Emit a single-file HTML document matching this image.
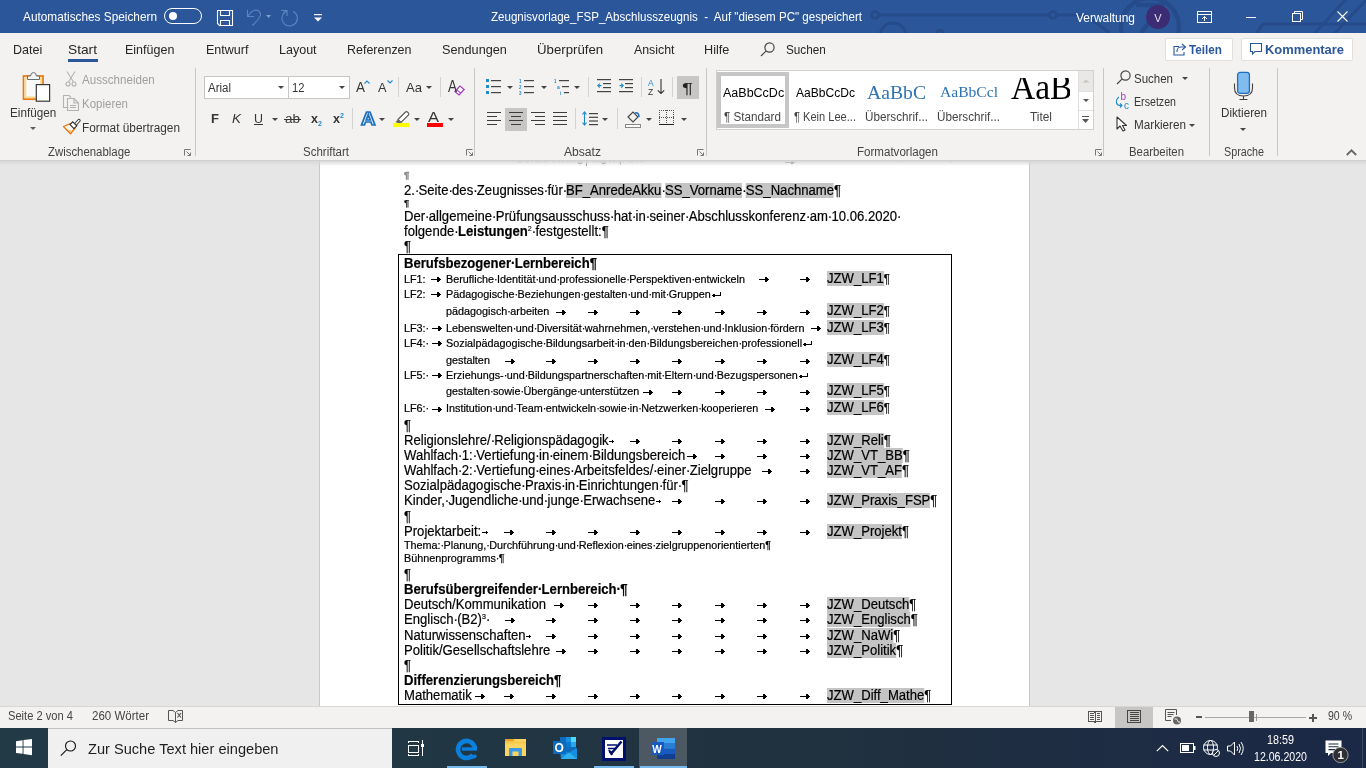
<!DOCTYPE html><html><head><meta charset="utf-8"><style>
*{margin:0;padding:0;box-sizing:border-box}
html,body{width:1366px;height:768px;overflow:hidden;background:#e6e6e6;}
body{will-change:transform;font-family:'Liberation Sans',sans-serif}
.t{position:absolute;white-space:pre;line-height:1}
svg{overflow:visible}
.sp{position:relative}.sp::after{content:'\00B7';position:absolute;left:0;right:0;text-align:center}.hl{background:#c4c4c4;display:inline-block;line-height:15px;height:15px}.dt{-webkit-text-stroke:0.2px #000}</style></head><body><div style="position:absolute;left:319px;top:161px;width:1px;height:545px;background:#c8c8c8;"></div><div style="position:absolute;left:320px;top:161px;width:709px;height:545px;background:#ffffff;"></div><div style="position:absolute;left:1029px;top:161px;width:1px;height:545px;background:#c8c8c8;"></div><div style="position:absolute;left:320px;top:161px;width:709px;height:5px;overflow:hidden;z-index:2"><div class="t" style="left:197px;top:-8px;font-size:11px;color:#8a8a8a;-webkit-text-stroke:0.3px #8a8a8a">Berufs·Kolleg·Hagen|Kthe</div><div class="t" style="left:540px;top:-7px;font-size:8px;color:#b0b0b0">Berufskolleg</div><div class="t" style="left:628px;top:-7px;font-size:9px;color:#999">¶</div></div><div style="position:absolute;left:586px;top:161px;width:1px;height:5px;background:#8a8a8a;"></div><svg style="position:absolute;left:785px;top:160px;z-index:2" width="11" height="5" shape-rendering="crispEdges" fill="#777"><rect x="0" y="2" width="10" height="1"/><rect x="6" y="1" width="2" height="3"/></svg><div style="position:absolute;left:398px;top:254px;width:554px;height:451px;border:1px solid #000;z-index:4"></div><svg style="position:absolute;left:431px;top:277px;z-index:6" width="11" height="5" shape-rendering="crispEdges" fill="#000"><rect x="0" y="2" width="10" height="1"/><rect x="6" y="0" width="2" height="5"/><rect x="8" y="1" width="1" height="3"/></svg><svg style="position:absolute;left:759px;top:277px;z-index:6" width="11" height="5" shape-rendering="crispEdges" fill="#000"><rect x="0" y="2" width="10" height="1"/><rect x="6" y="0" width="2" height="5"/><rect x="8" y="1" width="1" height="3"/></svg><svg style="position:absolute;left:800px;top:277px;z-index:6" width="11" height="5" shape-rendering="crispEdges" fill="#000"><rect x="0" y="2" width="10" height="1"/><rect x="6" y="0" width="2" height="5"/><rect x="8" y="1" width="1" height="3"/></svg><svg style="position:absolute;left:431px;top:292px;z-index:6" width="11" height="5" shape-rendering="crispEdges" fill="#000"><rect x="0" y="2" width="10" height="1"/><rect x="6" y="0" width="2" height="5"/><rect x="8" y="1" width="1" height="3"/></svg><svg style="position:absolute;left:712px;top:292px;z-index:6" width="10" height="6" shape-rendering="crispEdges" fill="#000"><rect x="0" y="3" width="1" height="1"/><rect x="1" y="2" width="2" height="3"/><rect x="3" y="3" width="5" height="1"/><rect x="8" y="0" width="1" height="4"/></svg><svg style="position:absolute;left:556px;top:310px;z-index:6" width="11" height="5" shape-rendering="crispEdges" fill="#000"><rect x="0" y="2" width="10" height="1"/><rect x="6" y="0" width="2" height="5"/><rect x="8" y="1" width="1" height="3"/></svg><svg style="position:absolute;left:588px;top:310px;z-index:6" width="11" height="5" shape-rendering="crispEdges" fill="#000"><rect x="0" y="2" width="10" height="1"/><rect x="6" y="0" width="2" height="5"/><rect x="8" y="1" width="1" height="3"/></svg><svg style="position:absolute;left:630px;top:310px;z-index:6" width="11" height="5" shape-rendering="crispEdges" fill="#000"><rect x="0" y="2" width="10" height="1"/><rect x="6" y="0" width="2" height="5"/><rect x="8" y="1" width="1" height="3"/></svg><svg style="position:absolute;left:672px;top:310px;z-index:6" width="11" height="5" shape-rendering="crispEdges" fill="#000"><rect x="0" y="2" width="10" height="1"/><rect x="6" y="0" width="2" height="5"/><rect x="8" y="1" width="1" height="3"/></svg><svg style="position:absolute;left:715px;top:310px;z-index:6" width="11" height="5" shape-rendering="crispEdges" fill="#000"><rect x="0" y="2" width="10" height="1"/><rect x="6" y="0" width="2" height="5"/><rect x="8" y="1" width="1" height="3"/></svg><svg style="position:absolute;left:757px;top:310px;z-index:6" width="11" height="5" shape-rendering="crispEdges" fill="#000"><rect x="0" y="2" width="10" height="1"/><rect x="6" y="0" width="2" height="5"/><rect x="8" y="1" width="1" height="3"/></svg><svg style="position:absolute;left:800px;top:310px;z-index:6" width="11" height="5" shape-rendering="crispEdges" fill="#000"><rect x="0" y="2" width="10" height="1"/><rect x="6" y="0" width="2" height="5"/><rect x="8" y="1" width="1" height="3"/></svg><svg style="position:absolute;left:432px;top:326px;z-index:6" width="11" height="5" shape-rendering="crispEdges" fill="#000"><rect x="0" y="2" width="10" height="1"/><rect x="6" y="0" width="2" height="5"/><rect x="8" y="1" width="1" height="3"/></svg><svg style="position:absolute;left:811px;top:326px;z-index:6" width="11" height="5" shape-rendering="crispEdges" fill="#000"><rect x="0" y="2" width="10" height="1"/><rect x="6" y="0" width="2" height="5"/><rect x="8" y="1" width="1" height="3"/></svg><svg style="position:absolute;left:432px;top:341px;z-index:6" width="11" height="5" shape-rendering="crispEdges" fill="#000"><rect x="0" y="2" width="10" height="1"/><rect x="6" y="0" width="2" height="5"/><rect x="8" y="1" width="1" height="3"/></svg><svg style="position:absolute;left:803px;top:341px;z-index:6" width="10" height="6" shape-rendering="crispEdges" fill="#000"><rect x="0" y="3" width="1" height="1"/><rect x="1" y="2" width="2" height="3"/><rect x="3" y="3" width="5" height="1"/><rect x="8" y="0" width="1" height="4"/></svg><svg style="position:absolute;left:505px;top:359px;z-index:6" width="11" height="5" shape-rendering="crispEdges" fill="#000"><rect x="0" y="2" width="10" height="1"/><rect x="6" y="0" width="2" height="5"/><rect x="8" y="1" width="1" height="3"/></svg><svg style="position:absolute;left:546px;top:359px;z-index:6" width="11" height="5" shape-rendering="crispEdges" fill="#000"><rect x="0" y="2" width="10" height="1"/><rect x="6" y="0" width="2" height="5"/><rect x="8" y="1" width="1" height="3"/></svg><svg style="position:absolute;left:588px;top:359px;z-index:6" width="11" height="5" shape-rendering="crispEdges" fill="#000"><rect x="0" y="2" width="10" height="1"/><rect x="6" y="0" width="2" height="5"/><rect x="8" y="1" width="1" height="3"/></svg><svg style="position:absolute;left:630px;top:359px;z-index:6" width="11" height="5" shape-rendering="crispEdges" fill="#000"><rect x="0" y="2" width="10" height="1"/><rect x="6" y="0" width="2" height="5"/><rect x="8" y="1" width="1" height="3"/></svg><svg style="position:absolute;left:672px;top:359px;z-index:6" width="11" height="5" shape-rendering="crispEdges" fill="#000"><rect x="0" y="2" width="10" height="1"/><rect x="6" y="0" width="2" height="5"/><rect x="8" y="1" width="1" height="3"/></svg><svg style="position:absolute;left:715px;top:359px;z-index:6" width="11" height="5" shape-rendering="crispEdges" fill="#000"><rect x="0" y="2" width="10" height="1"/><rect x="6" y="0" width="2" height="5"/><rect x="8" y="1" width="1" height="3"/></svg><svg style="position:absolute;left:757px;top:359px;z-index:6" width="11" height="5" shape-rendering="crispEdges" fill="#000"><rect x="0" y="2" width="10" height="1"/><rect x="6" y="0" width="2" height="5"/><rect x="8" y="1" width="1" height="3"/></svg><svg style="position:absolute;left:800px;top:359px;z-index:6" width="11" height="5" shape-rendering="crispEdges" fill="#000"><rect x="0" y="2" width="10" height="1"/><rect x="6" y="0" width="2" height="5"/><rect x="8" y="1" width="1" height="3"/></svg><svg style="position:absolute;left:432px;top:373px;z-index:6" width="11" height="5" shape-rendering="crispEdges" fill="#000"><rect x="0" y="2" width="10" height="1"/><rect x="6" y="0" width="2" height="5"/><rect x="8" y="1" width="1" height="3"/></svg><svg style="position:absolute;left:799px;top:373px;z-index:6" width="10" height="6" shape-rendering="crispEdges" fill="#000"><rect x="0" y="3" width="1" height="1"/><rect x="1" y="2" width="2" height="3"/><rect x="3" y="3" width="5" height="1"/><rect x="8" y="0" width="1" height="4"/></svg><svg style="position:absolute;left:643px;top:390px;z-index:6" width="11" height="5" shape-rendering="crispEdges" fill="#000"><rect x="0" y="2" width="10" height="1"/><rect x="6" y="0" width="2" height="5"/><rect x="8" y="1" width="1" height="3"/></svg><svg style="position:absolute;left:672px;top:390px;z-index:6" width="11" height="5" shape-rendering="crispEdges" fill="#000"><rect x="0" y="2" width="10" height="1"/><rect x="6" y="0" width="2" height="5"/><rect x="8" y="1" width="1" height="3"/></svg><svg style="position:absolute;left:715px;top:390px;z-index:6" width="11" height="5" shape-rendering="crispEdges" fill="#000"><rect x="0" y="2" width="10" height="1"/><rect x="6" y="0" width="2" height="5"/><rect x="8" y="1" width="1" height="3"/></svg><svg style="position:absolute;left:757px;top:390px;z-index:6" width="11" height="5" shape-rendering="crispEdges" fill="#000"><rect x="0" y="2" width="10" height="1"/><rect x="6" y="0" width="2" height="5"/><rect x="8" y="1" width="1" height="3"/></svg><svg style="position:absolute;left:800px;top:390px;z-index:6" width="11" height="5" shape-rendering="crispEdges" fill="#000"><rect x="0" y="2" width="10" height="1"/><rect x="6" y="0" width="2" height="5"/><rect x="8" y="1" width="1" height="3"/></svg><svg style="position:absolute;left:432px;top:407px;z-index:6" width="11" height="5" shape-rendering="crispEdges" fill="#000"><rect x="0" y="2" width="10" height="1"/><rect x="6" y="0" width="2" height="5"/><rect x="8" y="1" width="1" height="3"/></svg><svg style="position:absolute;left:765px;top:407px;z-index:6" width="11" height="5" shape-rendering="crispEdges" fill="#000"><rect x="0" y="2" width="10" height="1"/><rect x="6" y="0" width="2" height="5"/><rect x="8" y="1" width="1" height="3"/></svg><svg style="position:absolute;left:800px;top:407px;z-index:6" width="11" height="5" shape-rendering="crispEdges" fill="#000"><rect x="0" y="2" width="10" height="1"/><rect x="6" y="0" width="2" height="5"/><rect x="8" y="1" width="1" height="3"/></svg><svg style="position:absolute;left:609px;top:439px;z-index:6" width="11" height="5" shape-rendering="crispEdges" fill="#000"><rect x="0" y="2" width="5" height="1"/><rect x="3" y="1" width="1" height="3"/></svg><svg style="position:absolute;left:630px;top:439px;z-index:6" width="11" height="5" shape-rendering="crispEdges" fill="#000"><rect x="0" y="2" width="10" height="1"/><rect x="6" y="0" width="2" height="5"/><rect x="8" y="1" width="1" height="3"/></svg><svg style="position:absolute;left:672px;top:439px;z-index:6" width="11" height="5" shape-rendering="crispEdges" fill="#000"><rect x="0" y="2" width="10" height="1"/><rect x="6" y="0" width="2" height="5"/><rect x="8" y="1" width="1" height="3"/></svg><svg style="position:absolute;left:715px;top:439px;z-index:6" width="11" height="5" shape-rendering="crispEdges" fill="#000"><rect x="0" y="2" width="10" height="1"/><rect x="6" y="0" width="2" height="5"/><rect x="8" y="1" width="1" height="3"/></svg><svg style="position:absolute;left:757px;top:439px;z-index:6" width="11" height="5" shape-rendering="crispEdges" fill="#000"><rect x="0" y="2" width="10" height="1"/><rect x="6" y="0" width="2" height="5"/><rect x="8" y="1" width="1" height="3"/></svg><svg style="position:absolute;left:800px;top:439px;z-index:6" width="11" height="5" shape-rendering="crispEdges" fill="#000"><rect x="0" y="2" width="10" height="1"/><rect x="6" y="0" width="2" height="5"/><rect x="8" y="1" width="1" height="3"/></svg><svg style="position:absolute;left:687px;top:454px;z-index:6" width="11" height="5" shape-rendering="crispEdges" fill="#000"><rect x="0" y="2" width="10" height="1"/><rect x="6" y="0" width="2" height="5"/><rect x="8" y="1" width="1" height="3"/></svg><svg style="position:absolute;left:715px;top:454px;z-index:6" width="11" height="5" shape-rendering="crispEdges" fill="#000"><rect x="0" y="2" width="10" height="1"/><rect x="6" y="0" width="2" height="5"/><rect x="8" y="1" width="1" height="3"/></svg><svg style="position:absolute;left:757px;top:454px;z-index:6" width="11" height="5" shape-rendering="crispEdges" fill="#000"><rect x="0" y="2" width="10" height="1"/><rect x="6" y="0" width="2" height="5"/><rect x="8" y="1" width="1" height="3"/></svg><svg style="position:absolute;left:800px;top:454px;z-index:6" width="11" height="5" shape-rendering="crispEdges" fill="#000"><rect x="0" y="2" width="10" height="1"/><rect x="6" y="0" width="2" height="5"/><rect x="8" y="1" width="1" height="3"/></svg><svg style="position:absolute;left:762px;top:469px;z-index:6" width="11" height="5" shape-rendering="crispEdges" fill="#000"><rect x="0" y="2" width="10" height="1"/><rect x="6" y="0" width="2" height="5"/><rect x="8" y="1" width="1" height="3"/></svg><svg style="position:absolute;left:800px;top:469px;z-index:6" width="11" height="5" shape-rendering="crispEdges" fill="#000"><rect x="0" y="2" width="10" height="1"/><rect x="6" y="0" width="2" height="5"/><rect x="8" y="1" width="1" height="3"/></svg><svg style="position:absolute;left:656px;top:499px;z-index:6" width="11" height="5" shape-rendering="crispEdges" fill="#000"><rect x="0" y="2" width="5" height="1"/><rect x="3" y="1" width="1" height="3"/></svg><svg style="position:absolute;left:672px;top:499px;z-index:6" width="11" height="5" shape-rendering="crispEdges" fill="#000"><rect x="0" y="2" width="10" height="1"/><rect x="6" y="0" width="2" height="5"/><rect x="8" y="1" width="1" height="3"/></svg><svg style="position:absolute;left:715px;top:499px;z-index:6" width="11" height="5" shape-rendering="crispEdges" fill="#000"><rect x="0" y="2" width="10" height="1"/><rect x="6" y="0" width="2" height="5"/><rect x="8" y="1" width="1" height="3"/></svg><svg style="position:absolute;left:757px;top:499px;z-index:6" width="11" height="5" shape-rendering="crispEdges" fill="#000"><rect x="0" y="2" width="10" height="1"/><rect x="6" y="0" width="2" height="5"/><rect x="8" y="1" width="1" height="3"/></svg><svg style="position:absolute;left:800px;top:499px;z-index:6" width="11" height="5" shape-rendering="crispEdges" fill="#000"><rect x="0" y="2" width="10" height="1"/><rect x="6" y="0" width="2" height="5"/><rect x="8" y="1" width="1" height="3"/></svg><svg style="position:absolute;left:482px;top:530px;z-index:6" width="11" height="5" shape-rendering="crispEdges" fill="#000"><rect x="0" y="2" width="6" height="1"/><rect x="4" y="1" width="1" height="3"/></svg><svg style="position:absolute;left:504px;top:530px;z-index:6" width="11" height="5" shape-rendering="crispEdges" fill="#000"><rect x="0" y="2" width="10" height="1"/><rect x="6" y="0" width="2" height="5"/><rect x="8" y="1" width="1" height="3"/></svg><svg style="position:absolute;left:546px;top:530px;z-index:6" width="11" height="5" shape-rendering="crispEdges" fill="#000"><rect x="0" y="2" width="10" height="1"/><rect x="6" y="0" width="2" height="5"/><rect x="8" y="1" width="1" height="3"/></svg><svg style="position:absolute;left:588px;top:530px;z-index:6" width="11" height="5" shape-rendering="crispEdges" fill="#000"><rect x="0" y="2" width="10" height="1"/><rect x="6" y="0" width="2" height="5"/><rect x="8" y="1" width="1" height="3"/></svg><svg style="position:absolute;left:630px;top:530px;z-index:6" width="11" height="5" shape-rendering="crispEdges" fill="#000"><rect x="0" y="2" width="10" height="1"/><rect x="6" y="0" width="2" height="5"/><rect x="8" y="1" width="1" height="3"/></svg><svg style="position:absolute;left:672px;top:530px;z-index:6" width="11" height="5" shape-rendering="crispEdges" fill="#000"><rect x="0" y="2" width="10" height="1"/><rect x="6" y="0" width="2" height="5"/><rect x="8" y="1" width="1" height="3"/></svg><svg style="position:absolute;left:715px;top:530px;z-index:6" width="11" height="5" shape-rendering="crispEdges" fill="#000"><rect x="0" y="2" width="10" height="1"/><rect x="6" y="0" width="2" height="5"/><rect x="8" y="1" width="1" height="3"/></svg><svg style="position:absolute;left:757px;top:530px;z-index:6" width="11" height="5" shape-rendering="crispEdges" fill="#000"><rect x="0" y="2" width="10" height="1"/><rect x="6" y="0" width="2" height="5"/><rect x="8" y="1" width="1" height="3"/></svg><svg style="position:absolute;left:800px;top:530px;z-index:6" width="11" height="5" shape-rendering="crispEdges" fill="#000"><rect x="0" y="2" width="10" height="1"/><rect x="6" y="0" width="2" height="5"/><rect x="8" y="1" width="1" height="3"/></svg><svg style="position:absolute;left:554px;top:603px;z-index:6" width="11" height="5" shape-rendering="crispEdges" fill="#000"><rect x="0" y="2" width="10" height="1"/><rect x="6" y="0" width="2" height="5"/><rect x="8" y="1" width="1" height="3"/></svg><svg style="position:absolute;left:588px;top:603px;z-index:6" width="11" height="5" shape-rendering="crispEdges" fill="#000"><rect x="0" y="2" width="10" height="1"/><rect x="6" y="0" width="2" height="5"/><rect x="8" y="1" width="1" height="3"/></svg><svg style="position:absolute;left:630px;top:603px;z-index:6" width="11" height="5" shape-rendering="crispEdges" fill="#000"><rect x="0" y="2" width="10" height="1"/><rect x="6" y="0" width="2" height="5"/><rect x="8" y="1" width="1" height="3"/></svg><svg style="position:absolute;left:672px;top:603px;z-index:6" width="11" height="5" shape-rendering="crispEdges" fill="#000"><rect x="0" y="2" width="10" height="1"/><rect x="6" y="0" width="2" height="5"/><rect x="8" y="1" width="1" height="3"/></svg><svg style="position:absolute;left:715px;top:603px;z-index:6" width="11" height="5" shape-rendering="crispEdges" fill="#000"><rect x="0" y="2" width="10" height="1"/><rect x="6" y="0" width="2" height="5"/><rect x="8" y="1" width="1" height="3"/></svg><svg style="position:absolute;left:757px;top:603px;z-index:6" width="11" height="5" shape-rendering="crispEdges" fill="#000"><rect x="0" y="2" width="10" height="1"/><rect x="6" y="0" width="2" height="5"/><rect x="8" y="1" width="1" height="3"/></svg><svg style="position:absolute;left:800px;top:603px;z-index:6" width="11" height="5" shape-rendering="crispEdges" fill="#000"><rect x="0" y="2" width="10" height="1"/><rect x="6" y="0" width="2" height="5"/><rect x="8" y="1" width="1" height="3"/></svg><svg style="position:absolute;left:505px;top:618px;z-index:6" width="11" height="5" shape-rendering="crispEdges" fill="#000"><rect x="0" y="2" width="10" height="1"/><rect x="6" y="0" width="2" height="5"/><rect x="8" y="1" width="1" height="3"/></svg><svg style="position:absolute;left:546px;top:618px;z-index:6" width="11" height="5" shape-rendering="crispEdges" fill="#000"><rect x="0" y="2" width="10" height="1"/><rect x="6" y="0" width="2" height="5"/><rect x="8" y="1" width="1" height="3"/></svg><svg style="position:absolute;left:588px;top:618px;z-index:6" width="11" height="5" shape-rendering="crispEdges" fill="#000"><rect x="0" y="2" width="10" height="1"/><rect x="6" y="0" width="2" height="5"/><rect x="8" y="1" width="1" height="3"/></svg><svg style="position:absolute;left:630px;top:618px;z-index:6" width="11" height="5" shape-rendering="crispEdges" fill="#000"><rect x="0" y="2" width="10" height="1"/><rect x="6" y="0" width="2" height="5"/><rect x="8" y="1" width="1" height="3"/></svg><svg style="position:absolute;left:672px;top:618px;z-index:6" width="11" height="5" shape-rendering="crispEdges" fill="#000"><rect x="0" y="2" width="10" height="1"/><rect x="6" y="0" width="2" height="5"/><rect x="8" y="1" width="1" height="3"/></svg><svg style="position:absolute;left:715px;top:618px;z-index:6" width="11" height="5" shape-rendering="crispEdges" fill="#000"><rect x="0" y="2" width="10" height="1"/><rect x="6" y="0" width="2" height="5"/><rect x="8" y="1" width="1" height="3"/></svg><svg style="position:absolute;left:757px;top:618px;z-index:6" width="11" height="5" shape-rendering="crispEdges" fill="#000"><rect x="0" y="2" width="10" height="1"/><rect x="6" y="0" width="2" height="5"/><rect x="8" y="1" width="1" height="3"/></svg><svg style="position:absolute;left:800px;top:618px;z-index:6" width="11" height="5" shape-rendering="crispEdges" fill="#000"><rect x="0" y="2" width="10" height="1"/><rect x="6" y="0" width="2" height="5"/><rect x="8" y="1" width="1" height="3"/></svg><svg style="position:absolute;left:526px;top:634px;z-index:6" width="11" height="5" shape-rendering="crispEdges" fill="#000"><rect x="0" y="2" width="5" height="1"/><rect x="3" y="1" width="1" height="3"/></svg><svg style="position:absolute;left:546px;top:634px;z-index:6" width="11" height="5" shape-rendering="crispEdges" fill="#000"><rect x="0" y="2" width="10" height="1"/><rect x="6" y="0" width="2" height="5"/><rect x="8" y="1" width="1" height="3"/></svg><svg style="position:absolute;left:588px;top:634px;z-index:6" width="11" height="5" shape-rendering="crispEdges" fill="#000"><rect x="0" y="2" width="10" height="1"/><rect x="6" y="0" width="2" height="5"/><rect x="8" y="1" width="1" height="3"/></svg><svg style="position:absolute;left:630px;top:634px;z-index:6" width="11" height="5" shape-rendering="crispEdges" fill="#000"><rect x="0" y="2" width="10" height="1"/><rect x="6" y="0" width="2" height="5"/><rect x="8" y="1" width="1" height="3"/></svg><svg style="position:absolute;left:672px;top:634px;z-index:6" width="11" height="5" shape-rendering="crispEdges" fill="#000"><rect x="0" y="2" width="10" height="1"/><rect x="6" y="0" width="2" height="5"/><rect x="8" y="1" width="1" height="3"/></svg><svg style="position:absolute;left:715px;top:634px;z-index:6" width="11" height="5" shape-rendering="crispEdges" fill="#000"><rect x="0" y="2" width="10" height="1"/><rect x="6" y="0" width="2" height="5"/><rect x="8" y="1" width="1" height="3"/></svg><svg style="position:absolute;left:757px;top:634px;z-index:6" width="11" height="5" shape-rendering="crispEdges" fill="#000"><rect x="0" y="2" width="10" height="1"/><rect x="6" y="0" width="2" height="5"/><rect x="8" y="1" width="1" height="3"/></svg><svg style="position:absolute;left:800px;top:634px;z-index:6" width="11" height="5" shape-rendering="crispEdges" fill="#000"><rect x="0" y="2" width="10" height="1"/><rect x="6" y="0" width="2" height="5"/><rect x="8" y="1" width="1" height="3"/></svg><svg style="position:absolute;left:556px;top:649px;z-index:6" width="11" height="5" shape-rendering="crispEdges" fill="#000"><rect x="0" y="2" width="10" height="1"/><rect x="6" y="0" width="2" height="5"/><rect x="8" y="1" width="1" height="3"/></svg><svg style="position:absolute;left:588px;top:649px;z-index:6" width="11" height="5" shape-rendering="crispEdges" fill="#000"><rect x="0" y="2" width="10" height="1"/><rect x="6" y="0" width="2" height="5"/><rect x="8" y="1" width="1" height="3"/></svg><svg style="position:absolute;left:630px;top:649px;z-index:6" width="11" height="5" shape-rendering="crispEdges" fill="#000"><rect x="0" y="2" width="10" height="1"/><rect x="6" y="0" width="2" height="5"/><rect x="8" y="1" width="1" height="3"/></svg><svg style="position:absolute;left:672px;top:649px;z-index:6" width="11" height="5" shape-rendering="crispEdges" fill="#000"><rect x="0" y="2" width="10" height="1"/><rect x="6" y="0" width="2" height="5"/><rect x="8" y="1" width="1" height="3"/></svg><svg style="position:absolute;left:715px;top:649px;z-index:6" width="11" height="5" shape-rendering="crispEdges" fill="#000"><rect x="0" y="2" width="10" height="1"/><rect x="6" y="0" width="2" height="5"/><rect x="8" y="1" width="1" height="3"/></svg><svg style="position:absolute;left:757px;top:649px;z-index:6" width="11" height="5" shape-rendering="crispEdges" fill="#000"><rect x="0" y="2" width="10" height="1"/><rect x="6" y="0" width="2" height="5"/><rect x="8" y="1" width="1" height="3"/></svg><svg style="position:absolute;left:800px;top:649px;z-index:6" width="11" height="5" shape-rendering="crispEdges" fill="#000"><rect x="0" y="2" width="10" height="1"/><rect x="6" y="0" width="2" height="5"/><rect x="8" y="1" width="1" height="3"/></svg><svg style="position:absolute;left:475px;top:694px;z-index:6" width="11" height="5" shape-rendering="crispEdges" fill="#000"><rect x="0" y="2" width="10" height="1"/><rect x="6" y="0" width="2" height="5"/><rect x="8" y="1" width="1" height="3"/></svg><svg style="position:absolute;left:504px;top:694px;z-index:6" width="11" height="5" shape-rendering="crispEdges" fill="#000"><rect x="0" y="2" width="10" height="1"/><rect x="6" y="0" width="2" height="5"/><rect x="8" y="1" width="1" height="3"/></svg><svg style="position:absolute;left:546px;top:694px;z-index:6" width="11" height="5" shape-rendering="crispEdges" fill="#000"><rect x="0" y="2" width="10" height="1"/><rect x="6" y="0" width="2" height="5"/><rect x="8" y="1" width="1" height="3"/></svg><svg style="position:absolute;left:588px;top:694px;z-index:6" width="11" height="5" shape-rendering="crispEdges" fill="#000"><rect x="0" y="2" width="10" height="1"/><rect x="6" y="0" width="2" height="5"/><rect x="8" y="1" width="1" height="3"/></svg><svg style="position:absolute;left:630px;top:694px;z-index:6" width="11" height="5" shape-rendering="crispEdges" fill="#000"><rect x="0" y="2" width="10" height="1"/><rect x="6" y="0" width="2" height="5"/><rect x="8" y="1" width="1" height="3"/></svg><svg style="position:absolute;left:672px;top:694px;z-index:6" width="11" height="5" shape-rendering="crispEdges" fill="#000"><rect x="0" y="2" width="10" height="1"/><rect x="6" y="0" width="2" height="5"/><rect x="8" y="1" width="1" height="3"/></svg><svg style="position:absolute;left:715px;top:694px;z-index:6" width="11" height="5" shape-rendering="crispEdges" fill="#000"><rect x="0" y="2" width="10" height="1"/><rect x="6" y="0" width="2" height="5"/><rect x="8" y="1" width="1" height="3"/></svg><svg style="position:absolute;left:757px;top:694px;z-index:6" width="11" height="5" shape-rendering="crispEdges" fill="#000"><rect x="0" y="2" width="10" height="1"/><rect x="6" y="0" width="2" height="5"/><rect x="8" y="1" width="1" height="3"/></svg><svg style="position:absolute;left:800px;top:694px;z-index:6" width="11" height="5" shape-rendering="crispEdges" fill="#000"><rect x="0" y="2" width="10" height="1"/><rect x="6" y="0" width="2" height="5"/><rect x="8" y="1" width="1" height="3"/></svg><div style="position:absolute;left:0px;top:0px;width:1366px;height:33px;background:#2b579a;"></div><svg style="position:absolute;left:0px;top:0px;overflow:hidden" width="1366" height="33" viewBox="0 0 1366 33">
    <g stroke="#264b8a" stroke-width="3" fill="none">
      <path d="M878 15 H1049 M1057 15 H1085"/>
      <circle cx="875" cy="15" r="3.5"/>
      <circle cx="1053" cy="15" r="3.5"/>
      <circle cx="1150" cy="27" r="29" stroke-width="4.5"/>
      <path d="M1136 5 H1162 L1141 33" stroke-width="4.5"/>
      <circle cx="893" cy="36" r="13"/>
      <circle cx="940" cy="34" r="3.5"/>
      <path d="M1256 34 L1263 24 H1366"/>
      <path d="M1314 34 L1346 -1"/>
      <path d="M1334 34 L1366 0"/>
      <path d="M1085 15 L1110 33"/>
    </g></svg><div style="position:absolute;left:164px;top:8px;width:38px;height:16px;border:1px solid #fff;border-radius:8px"></div><div style="position:absolute;left:169px;top:12px;width:8px;height:8px;background:#fff;border-radius:50%"></div><svg style="position:absolute;left:217px;top:10px;" width="17" height="17" viewBox="0 0 17 17"><g fill="none" stroke="#fff" stroke-width="1.1"><path d="M0.5 0.5 H15.5 V15.5 H2.5 L0.5 13.5 Z"/><path d="M3.5 0.5 V5.5 H12.5 V0.5"/><path d="M3.5 15.5 V10.5 H12.5 V15.5"/></g></svg><svg style="position:absolute;left:246px;top:9px;" width="27" height="18" viewBox="0 0 27 18"><g fill="none" stroke="#5f86c4" stroke-width="1.1"><path d="M1.5 1 V7.5 H8"/><path d="M2 7 Q6 1 10 1 Q14.5 1.5 14.5 6 Q14 9 6.5 16.5"/></g><path d="M20 6 h5 l-2.5 3z" fill="#7f9fd0"/></svg><svg style="position:absolute;left:280px;top:9px;" width="18" height="18" viewBox="0 0 18 18"><g fill="none" stroke="#5f86c4" stroke-width="1.1"><path d="M1 1.5 H7 V7"/><path d="M13 2.2 A7.8 7.8 0 1 1 5 3"/><path d="M3.5 4 L7 1.5"/></g></svg><svg style="position:absolute;left:313px;top:12px;" width="10" height="10" viewBox="0 0 10 10"><rect x="1" y="2" width="8" height="1.2" fill="#fff"/><path d="M1 5.5 h8 l-4 4z" fill="#fff"/></svg><div style="position:absolute;left:1146px;top:5px;width:24px;height:24px;border-radius:50%;background:#3c2c73"></div><svg style="position:absolute;left:1197px;top:11px;" width="15" height="13" viewBox="0 0 15 13"><g fill="none" stroke="#fff" stroke-width="1"><rect x="0.5" y="0.5" width="14" height="11"/><path d="M0.5 3.5 H14.5"/><path d="M7.5 10 V5.5 M5 8 L7.5 5.5 L10 8"/></g></svg><div style="position:absolute;left:1246px;top:17px;width:10px;height:1px;background:#ffffff;"></div><svg style="position:absolute;left:1292px;top:11px;" width="11" height="11" viewBox="0 0 11 11"><g fill="none" stroke="#fff" stroke-width="1"><rect x="0.5" y="2.5" width="8" height="8"/><path d="M2.5 2.5 V0.5 H10.5 V8.5 H8.5"/></g></svg><svg style="position:absolute;left:1337px;top:11px;" width="11" height="11" viewBox="0 0 11 11"><g stroke="#fff" stroke-width="1.1"><path d="M0.5 0.5 L10.5 10.5 M10.5 0.5 L0.5 10.5"/></g></svg><div style="position:absolute;left:0px;top:33px;width:1366px;height:127px;background:#f3f2f1;"></div><div style="position:absolute;left:0px;top:160px;width:1366px;height:1px;background:#d2d0ce;"></div><div style="position:absolute;left:0;top:161px;width:1366px;height:5px;background:linear-gradient(#d8d8d8,rgba(230,230,230,0));z-index:3"></div><div style="position:absolute;left:68px;top:59px;width:30px;height:3px;background:#2b579a;"></div><svg style="position:absolute;left:760px;top:42px;" width="15" height="15" viewBox="0 0 15 15"><g fill="none" stroke="#444" stroke-width="1.2"><circle cx="9.5" cy="5.5" r="4.6"/><path d="M6.2 8.8 L1 14"/></g></svg><div style="position:absolute;left:1165px;top:38px;width:68px;height:23px;background:#fff;border:1px solid #e1dfdd;border-radius:2px"></div><div style="position:absolute;left:1241px;top:38px;width:112px;height:23px;background:#fff;border:1px solid #e1dfdd;border-radius:2px"></div><svg style="position:absolute;left:1173px;top:43px;" width="13" height="13" viewBox="0 0 13 13"><g fill="none" stroke="#2b579a" stroke-width="1.1"><path d="M9 1 L12.5 4 L9 7"/><path d="M12.5 4 H8 A4 4 0 0 0 4 8 V9"/><path d="M6 3.5 H1 V12 H11 V9"/></g></svg><svg style="position:absolute;left:1250px;top:43px;" width="13" height="13" viewBox="0 0 13 13"><g fill="none" stroke="#2b579a" stroke-width="1.1"><path d="M0.5 0.5 H11.5 V8.5 H5 L2.5 11 V8.5 H0.5 Z"/></g></svg><div style="position:absolute;left:195px;top:68px;width:1px;height:88px;background:#c8c6c4;"></div><div style="position:absolute;left:474px;top:68px;width:1px;height:88px;background:#c8c6c4;"></div><div style="position:absolute;left:706px;top:68px;width:1px;height:88px;background:#c8c6c4;"></div><div style="position:absolute;left:1103px;top:68px;width:1px;height:88px;background:#c8c6c4;"></div><div style="position:absolute;left:1209px;top:68px;width:1px;height:88px;background:#c8c6c4;"></div><div style="position:absolute;left:1277px;top:68px;width:1px;height:88px;background:#c8c6c4;"></div><svg style="position:absolute;left:184px;top:149px;" width="7" height="7" viewBox="0 0 7 7"><g fill="none" stroke="#777" stroke-width="1"><path d="M0.5 6.5 V0.5 H6.5"/><path d="M2.5 2.5 L6 6 M6.5 3.5 V6.5 H3.5"/></g></svg><svg style="position:absolute;left:466px;top:149px;" width="7" height="7" viewBox="0 0 7 7"><g fill="none" stroke="#777" stroke-width="1"><path d="M0.5 6.5 V0.5 H6.5"/><path d="M2.5 2.5 L6 6 M6.5 3.5 V6.5 H3.5"/></g></svg><svg style="position:absolute;left:697px;top:149px;" width="7" height="7" viewBox="0 0 7 7"><g fill="none" stroke="#777" stroke-width="1"><path d="M0.5 6.5 V0.5 H6.5"/><path d="M2.5 2.5 L6 6 M6.5 3.5 V6.5 H3.5"/></g></svg><svg style="position:absolute;left:1095px;top:149px;" width="7" height="7" viewBox="0 0 7 7"><g fill="none" stroke="#777" stroke-width="1"><path d="M0.5 6.5 V0.5 H6.5"/><path d="M2.5 2.5 L6 6 M6.5 3.5 V6.5 H3.5"/></g></svg><svg style="position:absolute;left:1346px;top:149px;" width="11" height="7" viewBox="0 0 11 7"><path d="M0.8 6 L5.5 1.3 L10.2 6" fill="none" stroke="#666" stroke-width="1.8"/></svg><svg style="position:absolute;left:20px;top:71px;" width="32" height="32" viewBox="0 0 32 32">
      <rect x="3.5" y="5" width="19.5" height="23.2" fill="#fafafa" stroke="#e8790c" stroke-width="1.7"/>
      <rect x="5.5" y="7" width="15.5" height="19.2" fill="none" stroke="#fad98c" stroke-width="1.6"/>
      <path d="M7.5 8.5 V5 H10.5 Q11 1.5 13.5 1.5 Q16 1.5 16.5 5 H19.5 V8.5 Z" fill="#f4f4f4" stroke="#6b6b6b" stroke-width="1"/>
      <rect x="16.3" y="13.6" width="13.3" height="16.6" fill="#fff" stroke="#3a3a3a" stroke-width="1.2"/></svg><svg style="position:absolute;left:30px;top:127px;" width="6" height="3" viewBox="0 0 6 3"><path d="M0 0 H6 L3.0 3 Z" fill="#605e5c"/></svg><svg style="position:absolute;left:65px;top:71px;" width="12" height="16" viewBox="0 0 12 16"><g fill="none" stroke="#b4b2b0" stroke-width="1.1"><path d="M2 0.5 L8.5 11 M10 0.5 L3.5 11"/><circle cx="3" cy="13" r="2"/><circle cx="9" cy="13" r="2"/></g></svg><svg style="position:absolute;left:63px;top:95px;" width="16" height="16" viewBox="0 0 16 16"><g fill="none" stroke="#b4b2b0" stroke-width="1.1"><path d="M5.5 12.5 H0.5 V0.5 H6 L8 2.5"/><path d="M4.5 3.5 H11 L15.5 8 V15.5 H4.5 Z"/><path d="M11 3.5 V8 H15.5"/><path d="M7 10.5 H13 M7 12.5 H13"/></g></svg><svg style="position:absolute;left:62px;top:118px;" width="18" height="17" viewBox="0 0 18 17"><path d="M1.5 8.5 L8.5 5.5 L13 10 L8.5 15.8 Z" fill="#fdf7ee" stroke="#e8700c" stroke-width="1.3" stroke-linejoin="round"/>
       <path d="M5 11.5 L10 12.5 L8.3 14.6 Z" fill="#f7c26e"/>
       <path d="M13.5 6.5 L17 2.5" stroke="#333" stroke-width="3.4" stroke-linecap="round"/>
       <path d="M13.5 6.5 L17 2.5" stroke="#fff" stroke-width="1.4" stroke-linecap="round"/>
       <path d="M10.8 3.8 L14.8 7.8 L12 10.6 L8 6.6 Z" fill="#fff" stroke="#333" stroke-width="1.2"/></svg><div style="position:absolute;left:204px;top:76px;width:85px;height:23px;background:#fff;border:1px solid #c8c6c4"></div><div style="position:absolute;left:288px;top:76px;width:62px;height:23px;background:#fff;border:1px solid #c8c6c4"></div><svg style="position:absolute;left:278px;top:86px;" width="6" height="3" viewBox="0 0 6 3"><path d="M0 0 H6 L3.0 3 Z" fill="#444"/></svg><svg style="position:absolute;left:339px;top:86px;" width="6" height="3" viewBox="0 0 6 3"><path d="M0 0 H6 L3.0 3 Z" fill="#444"/></svg><svg style="position:absolute;left:364px;top:80px;" width="6" height="4" viewBox="0 0 6 4"><path d="M0.5 3.5 L3 1 L5.5 3.5" fill="none" stroke="#1e8bcd" stroke-width="1.1"/></svg><svg style="position:absolute;left:387px;top:80px;" width="6" height="4" viewBox="0 0 6 4"><path d="M0.5 0.5 L3 3 L5.5 0.5" fill="none" stroke="#1e8bcd" stroke-width="1.1"/></svg><div style="position:absolute;left:398px;top:77px;width:1px;height:20px;background:#d4d2d0;"></div><svg style="position:absolute;left:426px;top:86px;" width="6" height="3" viewBox="0 0 6 3"><path d="M0 0 H6 L3.0 3 Z" fill="#444"/></svg><div style="position:absolute;left:440px;top:77px;width:1px;height:20px;background:#d4d2d0;"></div><svg style="position:absolute;left:454px;top:85px;" width="11" height="10" viewBox="0 0 11 10"><path d="M0.8 6.5 L6 1 L10.2 4.5 L5 10 Z" fill="#fff" stroke="#a33ebf" stroke-width="1.2"/><path d="M2.6 4.6 L6.6 8.2" stroke="#a33ebf" stroke-width="1.1"/></svg><div style="position:absolute;left:254px;top:124px;width:9px;height:1px;background:#363636;"></div><svg style="position:absolute;left:272px;top:118px;" width="6" height="3" viewBox="0 0 6 3"><path d="M0 0 H6 L3.0 3 Z" fill="#444"/></svg><div style="position:absolute;left:284px;top:119px;width:17px;height:1px;background:#363636;"></div><div style="position:absolute;left:352px;top:108px;width:1px;height:21px;background:#d4d2d0;"></div><svg style="position:absolute;left:379px;top:118px;" width="6" height="3" viewBox="0 0 6 3"><path d="M0 0 H6 L3.0 3 Z" fill="#444"/></svg><svg style="position:absolute;left:393px;top:110px;" width="17" height="19" viewBox="0 0 17 19"><path d="M5 9.5 L12.5 2 Q13.5 1.2 14.5 2 L15.5 3 Q16.2 4 15.5 5 L8 12.5 Z" fill="#fff" stroke="#555" stroke-width="1.1"/><path d="M5 9.5 L8 12.5 L6.5 14 L2.5 12 Z" fill="#666"/><rect x="0" y="13" width="16" height="4" fill="#ffff00"/></svg><svg style="position:absolute;left:414px;top:118px;" width="6" height="3" viewBox="0 0 6 3"><path d="M0 0 H6 L3.0 3 Z" fill="#444"/></svg><div style="position:absolute;left:427px;top:123px;width:16px;height:4px;background:#ff0000;"></div><svg style="position:absolute;left:448px;top:118px;" width="6" height="3" viewBox="0 0 6 3"><path d="M0 0 H6 L3.0 3 Z" fill="#444"/></svg><svg style="position:absolute;left:486px;top:79px;" width="16" height="16" viewBox="0 0 16 16"><rect x="0" y="0" width="3" height="3" fill="#1e8bcd"/><rect x="0" y="6" width="3" height="3" fill="#1e8bcd"/><rect x="0" y="12" width="3" height="3" fill="#1e8bcd"/><rect x="5" y="1" width="10" height="1.2" fill="#444"/><rect x="5" y="7" width="10" height="1.2" fill="#444"/><rect x="5" y="13" width="10" height="1.2" fill="#444"/></svg><svg style="position:absolute;left:507px;top:86px;" width="6" height="3" viewBox="0 0 6 3"><path d="M0 0 H6 L3.0 3 Z" fill="#444"/></svg><svg style="position:absolute;left:519px;top:79px;" width="15" height="16" viewBox="0 0 15 16"><text x="0" y="4" font-size="4.5" fill="#1e8bcd" font-family="Liberation Sans" font-weight="700">1</text><text x="0" y="10" font-size="4.5" fill="#1e8bcd" font-family="Liberation Sans" font-weight="700">2</text><text x="0" y="16" font-size="4.5" fill="#1e8bcd" font-family="Liberation Sans" font-weight="700">3</text><rect x="5" y="1" width="10" height="1.2" fill="#444"/><rect x="5" y="7" width="10" height="1.2" fill="#444"/><rect x="5" y="13" width="10" height="1.2" fill="#444"/></svg><svg style="position:absolute;left:541px;top:86px;" width="6" height="3" viewBox="0 0 6 3"><path d="M0 0 H6 L3.0 3 Z" fill="#444"/></svg><svg style="position:absolute;left:554px;top:79px;" width="16" height="16" viewBox="0 0 16 16"><text x="0" y="4" font-size="4.5" fill="#1e8bcd" font-family="Liberation Sans" font-weight="700">1</text><text x="3" y="10" font-size="5" fill="#1e8bcd" font-family="Liberation Sans" font-weight="700">a</text><text x="6" y="16" font-size="4.5" fill="#1e8bcd" font-family="Liberation Sans" font-weight="700">i</text><rect x="5" y="1" width="10" height="1.2" fill="#444"/><rect x="8" y="7" width="7" height="1.2" fill="#444"/><rect x="10" y="13" width="5" height="1.2" fill="#444"/></svg><svg style="position:absolute;left:574px;top:86px;" width="6" height="3" viewBox="0 0 6 3"><path d="M0 0 H6 L3.0 3 Z" fill="#444"/></svg><div style="position:absolute;left:588px;top:77px;width:1px;height:20px;background:#d4d2d0;"></div><svg style="position:absolute;left:597px;top:79px;" width="15" height="14" viewBox="0 0 15 14"><rect x="0" y="0" width="14" height="1.2" fill="#444"/><rect x="6" y="4" width="8" height="1.2" fill="#444"/><rect x="6" y="8" width="8" height="1.2" fill="#444"/><rect x="0" y="12" width="14" height="1.2" fill="#444"/><path d="M4.5 6.6 H0.8 M2.8 4.6 L0.8 6.6 L2.8 8.6" fill="none" stroke="#1e8bcd" stroke-width="1.1"/></svg><svg style="position:absolute;left:619px;top:79px;" width="15" height="14" viewBox="0 0 15 14"><rect x="0" y="0" width="14" height="1.2" fill="#444"/><rect x="6" y="4" width="8" height="1.2" fill="#444"/><rect x="6" y="8" width="8" height="1.2" fill="#444"/><rect x="0" y="12" width="14" height="1.2" fill="#444"/><path d="M0.5 6.6 H4.2 M2.2 4.6 L4.2 6.6 L2.2 8.6" fill="none" stroke="#1e8bcd" stroke-width="1.1"/></svg><div style="position:absolute;left:641px;top:77px;width:1px;height:20px;background:#d4d2d0;"></div><svg style="position:absolute;left:648px;top:78px;" width="18" height="17" viewBox="0 0 18 17"><text x="0" y="8" font-size="8.5" fill="#1e8bcd" font-family="Liberation Sans">A</text><text x="0" y="16.5" font-size="8.5" fill="#333" font-family="Liberation Sans">Z</text><path d="M13 1 V15.5 M9.8 12.3 L13 15.5 L16.2 12.3" fill="none" stroke="#333" stroke-width="1.1"/></svg><div style="position:absolute;left:672px;top:77px;width:1px;height:20px;background:#d4d2d0;"></div><div style="position:absolute;left:677px;top:76px;width:22px;height:23px;background:#c8c6c4;"></div><svg style="position:absolute;left:487px;top:112px;shape-rendering:crispEdges;" width="14" height="14" viewBox="0 0 14 14"><rect x="0" y="0" width="14" height="1" fill="#3c3c3c"/><rect x="0" y="4" width="10" height="1" fill="#3c3c3c"/><rect x="0" y="8" width="14" height="1" fill="#3c3c3c"/><rect x="0" y="12" width="10" height="1" fill="#3c3c3c"/></svg><div style="position:absolute;left:505px;top:108px;width:22px;height:23px;background:#c8c6c4;"></div><svg style="position:absolute;left:509px;top:112px;shape-rendering:crispEdges;" width="14" height="14" viewBox="0 0 14 14"><rect x="0" y="0" width="14" height="1" fill="#3c3c3c"/><rect x="2" y="4" width="10" height="1" fill="#3c3c3c"/><rect x="0" y="8" width="14" height="1" fill="#3c3c3c"/><rect x="2" y="12" width="10" height="1" fill="#3c3c3c"/></svg><svg style="position:absolute;left:531px;top:112px;shape-rendering:crispEdges;" width="14" height="14" viewBox="0 0 14 14"><rect x="0" y="0" width="14" height="1" fill="#3c3c3c"/><rect x="4" y="4" width="10" height="1" fill="#3c3c3c"/><rect x="0" y="8" width="14" height="1" fill="#3c3c3c"/><rect x="4" y="12" width="10" height="1" fill="#3c3c3c"/></svg><svg style="position:absolute;left:553px;top:112px;shape-rendering:crispEdges;" width="14" height="14" viewBox="0 0 14 14"><rect x="0" y="0" width="14" height="1" fill="#3c3c3c"/><rect x="0" y="4" width="14" height="1" fill="#3c3c3c"/><rect x="0" y="8" width="14" height="1" fill="#3c3c3c"/><rect x="0" y="12" width="14" height="1" fill="#3c3c3c"/></svg><div style="position:absolute;left:575px;top:108px;width:1px;height:21px;background:#d4d2d0;"></div><svg style="position:absolute;left:582px;top:111px;" width="18" height="16" viewBox="0 0 18 16"><path d="M2.5 1 V14 M0.5 3.5 L2.5 1 L4.5 3.5 M0.5 11.5 L2.5 14 L4.5 11.5" fill="none" stroke="#1e8bcd" stroke-width="1.1"/><rect x="7" y="2" width="9" height="1.2" fill="#444"/><rect x="7" y="5.7" width="9" height="1.2" fill="#444"/><rect x="7" y="9.4" width="9" height="1.2" fill="#444"/><rect x="7" y="13" width="9" height="1.2" fill="#444"/></svg><svg style="position:absolute;left:602px;top:118px;" width="6" height="3" viewBox="0 0 6 3"><path d="M0 0 H6 L3.0 3 Z" fill="#444"/></svg><div style="position:absolute;left:617px;top:108px;width:1px;height:21px;background:#d4d2d0;"></div><svg style="position:absolute;left:625px;top:110px;" width="17" height="18" viewBox="0 0 17 18"><path d="M3 7 L8 2 L13 7 L8 12 Z" fill="none" stroke="#444" stroke-width="1.1"/><path d="M10 3 Q14 2 14 7" fill="none" stroke="#1e6fc0" stroke-width="1.5"/><rect x="0.5" y="14.5" width="15" height="3" fill="#fff" stroke="#888" stroke-width="1"/></svg><svg style="position:absolute;left:646px;top:118px;" width="6" height="3" viewBox="0 0 6 3"><path d="M0 0 H6 L3.0 3 Z" fill="#444"/></svg><svg style="position:absolute;left:659px;top:110px;shape-rendering:crispEdges;" width="16" height="16" viewBox="0 0 16 16"><g fill="#555"><rect x="0" y="0" width="1" height="1"/><rect x="0" y="0" width="1" height="1"/><rect x="14" y="0" width="1" height="1"/><rect x="0" y="7" width="1" height="1"/><rect x="7" y="0" width="1" height="1"/><rect x="2" y="0" width="1" height="1"/><rect x="0" y="2" width="1" height="1"/><rect x="14" y="2" width="1" height="1"/><rect x="2" y="7" width="1" height="1"/><rect x="7" y="2" width="1" height="1"/><rect x="4" y="0" width="1" height="1"/><rect x="0" y="4" width="1" height="1"/><rect x="14" y="4" width="1" height="1"/><rect x="4" y="7" width="1" height="1"/><rect x="7" y="4" width="1" height="1"/><rect x="6" y="0" width="1" height="1"/><rect x="0" y="6" width="1" height="1"/><rect x="14" y="6" width="1" height="1"/><rect x="6" y="7" width="1" height="1"/><rect x="7" y="6" width="1" height="1"/><rect x="8" y="0" width="1" height="1"/><rect x="0" y="8" width="1" height="1"/><rect x="14" y="8" width="1" height="1"/><rect x="8" y="7" width="1" height="1"/><rect x="7" y="8" width="1" height="1"/><rect x="10" y="0" width="1" height="1"/><rect x="0" y="10" width="1" height="1"/><rect x="14" y="10" width="1" height="1"/><rect x="10" y="7" width="1" height="1"/><rect x="7" y="10" width="1" height="1"/><rect x="12" y="0" width="1" height="1"/><rect x="0" y="12" width="1" height="1"/><rect x="14" y="12" width="1" height="1"/><rect x="12" y="7" width="1" height="1"/><rect x="7" y="12" width="1" height="1"/><rect x="14" y="0" width="1" height="1"/><rect x="0" y="14" width="1" height="1"/><rect x="14" y="14" width="1" height="1"/><rect x="14" y="7" width="1" height="1"/><rect x="7" y="14" width="1" height="1"/></g><rect x="0" y="14" width="15" height="1.3" fill="#222"/></svg><svg style="position:absolute;left:681px;top:118px;" width="6" height="3" viewBox="0 0 6 3"><path d="M0 0 H6 L3.0 3 Z" fill="#444"/></svg><div style="position:absolute;left:716px;top:70px;width:378px;height:60px;background:#fff;border:1px solid #d2d0ce"></div><div style="position:absolute;left:717px;top:72px;width:72px;height:56px;border:4px solid #c6c6c6"></div><div style="position:absolute;left:1078px;top:71px;width:1px;height:58px;background:#e1dfdd;"></div><div style="position:absolute;left:1079px;top:71px;width:14px;height:20px;background:#e9e8e7;"></div><div style="position:absolute;left:1079px;top:91px;width:14px;height:1px;background:#e1dfdd;"></div><div style="position:absolute;left:1079px;top:110px;width:14px;height:1px;background:#e1dfdd;"></div><svg style="position:absolute;left:1082px;top:79px;" width="8" height="4" viewBox="0 0 8 4"><path d="M0.5 3.5 L4 0.5 L7.5 3.5" fill="#c8c6c4"/></svg><svg style="position:absolute;left:1083px;top:99px;" width="6" height="3" viewBox="0 0 6 3"><path d="M0 0 H6 L3.0 3 Z" fill="#555"/></svg><svg style="position:absolute;left:1082px;top:116px;" width="8" height="8" viewBox="0 0 8 8"><rect x="0" y="0" width="7" height="1" fill="#555"/><path d="M0 3 H7 L3.5 7 Z" fill="#555"/></svg><div style="position:absolute;left:1008px;top:78px;width:62px;height:30px;overflow:hidden;z-index:6"><div class="t" style="left:3px;top:-9px;font-size:36px;color:#000;font-family:'Liberation Serif';transform:scaleX(0.93);transform-origin:0 0">AaB</div></div><svg style="position:absolute;left:1116px;top:70px;" width="15" height="15" viewBox="0 0 15 15"><g fill="none" stroke="#444" stroke-width="1.2"><circle cx="9.5" cy="5.5" r="4.6"/><path d="M6.2 8.8 L1 14"/></g></svg><svg style="position:absolute;left:1182px;top:77px;" width="6" height="3" viewBox="0 0 6 3"><path d="M0 0 H6 L3.0 3 Z" fill="#444"/></svg><svg style="position:absolute;left:1115px;top:93px;" width="15" height="16" viewBox="0 0 15 16"><text x="5.5" y="7" font-size="10" fill="#a33ebf" font-family="Liberation Sans">b</text><text x="9" y="16" font-size="10" fill="#1e8bcd" font-family="Liberation Sans">c</text><path d="M4 4 Q1 6 1.5 10 Q2.5 13 7 12.5 M5 10.5 L7 12.5 L5 14.5" fill="none" stroke="#1e8bcd" stroke-width="1.1"/></svg><svg style="position:absolute;left:1116px;top:116px;" width="12" height="16" viewBox="0 0 12 16"><path d="M1 1 L1 13 L4 10 L7 15 L9 14 L6.5 9.5 L10.5 9.5 Z" fill="#fff" stroke="#333" stroke-width="1.1" stroke-linejoin="round"/></svg><svg style="position:absolute;left:1189px;top:124px;" width="6" height="3" viewBox="0 0 6 3"><path d="M0 0 H6 L3.0 3 Z" fill="#444"/></svg><svg style="position:absolute;left:1233px;top:71px;" width="21" height="30" viewBox="0 0 21 30"><rect x="4.6" y="1.4" width="11.8" height="21" rx="2.6" fill="#80bdee" stroke="#1f6fc0" stroke-width="1.3"/><path d="M1.5 12.5 V17 Q1.5 25 10.5 25 Q19.5 25 19.5 17 V12.5" fill="none" stroke="#444" stroke-width="1.1"/><path d="M10.5 25 V28.5 M6.5 28.5 H14.5" stroke="#444" stroke-width="1.1"/></svg><svg style="position:absolute;left:1240px;top:128px;" width="6" height="3" viewBox="0 0 6 3"><path d="M0 0 H6 L3.0 3 Z" fill="#444"/></svg><div style="position:absolute;left:0px;top:706px;width:1366px;height:1px;background:#d6d6d6;"></div><div style="position:absolute;left:0px;top:707px;width:1366px;height:21px;background:#f3f2f1;"></div><svg style="position:absolute;left:168px;top:710px;" width="16" height="14" viewBox="0 0 16 14"><g fill="none" stroke="#555" stroke-width="1"><path d="M0.5 0.5 H5 L7.5 2.5 V12.5 L5 10.5 H0.5 Z"/><path d="M7.5 2.5 L10 0.5 H14.5 V10.5 H10 L7.5 12.5"/><path d="M9.5 3 L13 7.5 M13 3 L9.5 7.5" stroke-width="1.2"/></g></svg><svg style="position:absolute;left:1088px;top:710px;shape-rendering:crispEdges" width="15" height="14" viewBox="0 0 15 14"><g fill="none" stroke="#555" stroke-width="1"><path d="M0.5 1.5 H6 L7 2.5 L8 1.5 H13.5 V11.5 H8 L7 12.5 L6 11.5 H0.5 Z"/><path d="M7 2.5 V12.5"/><path d="M2 3.5 H5.5 M8.5 3.5 H12"/><path d="M2 5.5 H5.5 M8.5 5.5 H12"/><path d="M2 7.5 H5.5 M8.5 7.5 H12"/><path d="M2 9.5 H5.5 M8.5 9.5 H12"/></g></svg><div style="position:absolute;left:1115px;top:707px;width:38px;height:21px;background:#c8c6c4;"></div><svg style="position:absolute;left:1127px;top:710px;shape-rendering:crispEdges" width="15" height="14" viewBox="0 0 15 14"><g fill="none" stroke="#444" stroke-width="1"><rect x="0.5" y="0.5" width="13" height="12"/><path d="M2.5 2.5 H11.5"/><path d="M2.5 4.5 H11.5"/><path d="M2.5 6.5 H11.5"/><path d="M2.5 8.5 H11.5"/><path d="M2.5 10.5 H11.5"/></g></svg><svg style="position:absolute;left:1165px;top:709px;" width="17" height="16" viewBox="0 0 17 16"><g fill="none" stroke="#555" stroke-width="1"><path d="M11.5 6 V0.5 H0.5 V11.5 H6"/><path d="M2.5 3.5 H9.5 M2.5 5.5 H8.5 M2.5 7.5 H6.5"/></g><circle cx="12" cy="11.5" r="4" fill="#666"/><path d="M9.5 10 Q12 9 12.5 11.5 Q13 14 15 13" stroke="#f3f2f1" stroke-width="1" fill="none"/></svg><div style="position:absolute;left:1196px;top:716px;width:6px;height:2px;background:#555;"></div><div style="position:absolute;left:1205px;top:717px;width:101px;height:1px;background:#a8a8a8;"></div><div style="position:absolute;left:1249px;top:711px;width:5px;height:11px;background:#666;"></div><div style="position:absolute;left:1256px;top:714px;width:1px;height:7px;background:#999;"></div><div style="position:absolute;left:1309px;top:717px;width:8px;height:2px;background:#555;"></div><div style="position:absolute;left:1312px;top:714px;width:2px;height:8px;background:#555;"></div><div style="position:absolute;left:0;top:728px;width:1366px;height:40px;background:linear-gradient(90deg,#213a46 0%,#213744 30%,#20313f 60%,#1e2c43 80%,#1b2846 100%)"></div><svg style="position:absolute;left:16px;top:739px;" width="17" height="18" viewBox="0 0 17 18"><path d="M0 2.2 L6.6 1.3 V7.6 H0 Z M7.5 1.1 L16 0 V7.6 H7.5 Z M0 8.5 H6.6 V14.8 L0 14 Z M7.5 8.5 H16 V16.2 L7.5 15 Z" fill="#fff"/></svg><div style="position:absolute;left:48px;top:728px;width:344px;height:40px;background:#f0f0f0;"></div><div style="position:absolute;left:48px;top:728px;width:344px;height:1px;background:#c2c2c2;"></div><svg style="position:absolute;left:60px;top:740px;" width="17" height="17" viewBox="0 0 17 17"><g fill="none" stroke="#111" stroke-width="1.1"><circle cx="10.5" cy="6" r="5"/><path d="M6.8 9.7 L0.8 15.7"/></g></svg><svg style="position:absolute;left:407px;top:739px;shape-rendering:crispEdges" width="18" height="18" viewBox="0 0 18 18"><g fill="none" stroke="#fff" stroke-width="1"><path d="M1.5 4 V2.5 H11.5 V4"/><rect x="1.5" y="6.5" width="10" height="7"/><path d="M1.5 15 V16.5 H11.5 V15"/><path d="M15.5 1 V17"/></g><rect x="14" y="5" width="3" height="3" fill="#fff"/></svg><svg style="position:absolute;left:456px;top:736px;" width="23" height="24" viewBox="0 0 23 24"><path d="M19 12.5 A8.5 8.5 0 1 0 17 19" stroke="#0a7fdc" stroke-width="4.6" fill="none"/><rect x="6" y="11.3" width="15" height="3.4" fill="#0a7fdc"/><path d="M17 19 L20.5 18.5 V21.5 Q17 23.5 12 23" fill="#0a7fdc"/></svg><svg style="position:absolute;left:505px;top:739px;" width="22" height="18" viewBox="0 0 22 18"><rect x="0" y="0" width="21" height="17" fill="#fcd462"/><rect x="0" y="0" width="9" height="2.5" fill="#e6a527"/><rect x="0" y="2.5" width="21" height="2" fill="#f7c64a"/><path d="M4 17 V10 Q4 9 5 9 H16 Q17 9 17 10 V17 H13.5 V12.5 H7.5 V17 Z" fill="#3c9be8"/></svg><svg style="position:absolute;left:552px;top:736px;" width="26" height="23" viewBox="0 0 26 23"><rect x="8" y="1" width="16" height="17" fill="#0f6cbd"/><rect x="14" y="1" width="5" height="5" fill="#1b8ee0"/><rect x="19" y="1" width="5" height="5" fill="#50d9ff"/><rect x="14" y="6" width="5" height="5" fill="#0b78d0"/><rect x="19" y="6" width="5" height="5" fill="#28a8ea"/><path d="M8 12 L16.5 17 L25 12 V23 H9 Z" fill="#1490df"/><path d="M9 23 L17 16.5 L25 23 Z" fill="#2fb0f0"/><rect x="1" y="5" width="13" height="13" fill="#0a6ac0"/><text x="2.6" y="15.8" font-size="12" font-weight="700" fill="#fff" font-family="Liberation Sans">O</text></svg><svg style="position:absolute;left:602px;top:737px;" width="24" height="24" viewBox="0 0 24 24"><rect x="0" y="0" width="24" height="24" fill="#00106e"/><rect x="3" y="3" width="18" height="18" fill="#fff"/><path d="M5 8 H15 M6 11.5 H13 M7 15 H11" stroke="#00106e" stroke-width="1.6"/><path d="M9 17 L19.5 4.5" stroke="#00106e" stroke-width="2.5"/><path d="M7 13 L10 18" stroke="#00106e" stroke-width="2"/></svg><div style="position:absolute;left:639px;top:728px;width:48px;height:40px;background:#4c5862;"></div><svg style="position:absolute;left:651px;top:738px;" width="24" height="21" viewBox="0 0 24 21"><rect x="6" y="0" width="18" height="21" fill="#41a5ee"/><rect x="6" y="5" width="18" height="5.5" fill="#2b7cd3"/><rect x="6" y="10.5" width="18" height="5.5" fill="#185abd"/><rect x="6" y="16" width="18" height="5" fill="#103f91"/><rect x="0" y="4" width="13" height="13" fill="#185abd"/><text x="1.3" y="14.5" font-size="10" font-weight="700" fill="#fff" font-family="Liberation Sans">W</text></svg><div style="position:absolute;left:447px;top:766px;width:40px;height:2px;background:#76b9ed;"></div><div style="position:absolute;left:594px;top:766px;width:40px;height:2px;background:#76b9ed;"></div><div style="position:absolute;left:640px;top:766px;width:47px;height:2px;background:#76b9ed;"></div><svg style="position:absolute;left:1156px;top:744px;" width="13" height="8" viewBox="0 0 13 8"><path d="M0.8 7.2 L6.5 1.5 L12.2 7.2" fill="none" stroke="#fff" stroke-width="1.2"/></svg><svg style="position:absolute;left:1180px;top:743px;" width="16" height="11" viewBox="0 0 16 11"><rect x="0.5" y="0.5" width="13" height="9" fill="none" stroke="#fff" stroke-width="1"/><rect x="2" y="2" width="7" height="6" fill="#fff"/><rect x="14" y="3" width="1.5" height="4" fill="#fff"/></svg><svg style="position:absolute;left:1203px;top:740px;" width="17" height="17" viewBox="0 0 17 17"><g fill="none" stroke="#fff" stroke-width="1"><circle cx="7.5" cy="7.5" r="7"/><ellipse cx="7.5" cy="7.5" rx="3" ry="7"/><path d="M0.5 5 H14.5 M0.5 10 H11"/></g><circle cx="13" cy="13" r="3.5" fill="#1e2d44" stroke="#fff" stroke-width="1"/><path d="M11 15 L15 11" stroke="#fff" stroke-width="1"/></svg><svg style="position:absolute;left:1227px;top:741px;" width="17" height="15" viewBox="0 0 17 15"><g fill="none" stroke="#fff" stroke-width="1"><path d="M0.5 5 H3.5 L7.5 1 V14 L3.5 10 H0.5 Z"/><path d="M10 5 Q11.5 7.5 10 10 M12 3 Q15 7.5 12 12 M14 1 Q18.5 7.5 14 14"/></g></svg><svg style="position:absolute;left:1325px;top:740px;" width="26" height="26" viewBox="0 0 26 26"><path d="M0.5 0.5 H16.5 V13 H6 L3 16 V13 H0.5 Z" fill="#fff"/><path d="M3.5 4 H13.5 M3.5 6.8 H13.5 M3.5 9.6 H10" stroke="#1e2d44" stroke-width="1.1"/><circle cx="15.5" cy="15" r="7.6" fill="#2d2f33" stroke="#9a9a9a" stroke-width="1"/><text x="12.6" y="19.2" font-size="11.5" font-weight="700" fill="#fff" font-family="Liberation Sans">1</text></svg><div style="position:absolute;left:1362px;top:728px;width:1px;height:40px;background:#3a4a5a;"></div><div class="t" style="left:404.00px;top:170.00px;font-size:9.8px;color:#888888;font-weight:400;font-family:'Liberation Sans',sans-serif;z-index:6;-webkit-text-stroke:0.5px #888;">¶</div><div class="t" style="left:404.00px;top:183.00px;font-size:14px;color:#000;font-weight:400;font-family:'Liberation Sans',sans-serif;z-index:6;transform:scaleX(0.9357);transform-origin:0 0;"><span class="dt">2.<span class="sp"> </span>Seite<span class="sp"> </span>des<span class="sp"> </span>Zeugnisses<span class="sp"> </span>für<span class="sp"> </span></span></div><div class="t" style="left:566.38px;top:183.00px;font-size:14px;color:#000;font-weight:400;font-family:'Liberation Sans',sans-serif;z-index:6;transform:scaleX(0.9357);transform-origin:0 0;"><span class="dt"><span class="hl">BF_AnredeAkku</span><span class="sp"> </span><span class="hl">SS_Vorname</span><span class="sp"> </span><span class="hl">SS_Nachname</span>¶</span></div><div class="t" style="left:404.00px;top:198.00px;font-size:9.8px;color:#000;font-weight:400;font-family:'Liberation Sans',sans-serif;z-index:6;-webkit-text-stroke:0.2px #000;">¶</div><div class="t" style="left:404.00px;top:209.00px;font-size:14px;color:#000;font-weight:400;font-family:'Liberation Sans',sans-serif;z-index:6;transform:scaleX(0.9357);transform-origin:0 0;"><span class="dt">Der<span class="sp"> </span>allgemeine<span class="sp"> </span>Prüfungsausschuss<span class="sp"> </span>hat<span class="sp"> </span>in<span class="sp"> </span>seiner<span class="sp"> </span>Abschlusskonferenz<span class="sp"> </span>am<span class="sp"> </span>10.06.2020<span class="sp"> </span></span></div><div class="t" style="left:404.00px;top:224.00px;font-size:14px;color:#000;font-weight:400;font-family:'Liberation Sans',sans-serif;z-index:6;transform:scaleX(0.9357);transform-origin:0 0;"><span class="dt">folgende<span class="sp"> </span></span></div><div class="t" style="left:457.90px;top:224.00px;font-size:14px;color:#000;font-weight:400;font-family:'Liberation Sans',sans-serif;z-index:6;transform:scaleX(0.9357);transform-origin:0 0;"><span class="dt"><b>Leistungen</b><span style="font-size:7.5px;vertical-align:5px;color:#333">2</span><span class="sp"> </span>festgestellt:¶</span></div><div class="t" style="left:404.00px;top:239.00px;font-size:14px;color:#000;font-weight:400;font-family:'Liberation Sans',sans-serif;z-index:6;transform:scaleX(0.9357);transform-origin:0 0;"><span class="dt">¶</span></div><div class="t" style="left:404.00px;top:256.00px;font-size:14px;color:#000;font-weight:700;font-family:'Liberation Sans',sans-serif;z-index:6;transform:scaleX(0.9357);transform-origin:0 0;"><span class="dt">Berufsbezogener<span class="sp"> </span>Lernbereich¶</span></div><div class="t" style="left:404.00px;top:274.00px;font-size:10.8px;color:#000;font-weight:400;font-family:'Liberation Sans',sans-serif;z-index:6;"><span class="dt">LF1:</span></div><div class="t" style="left:446.07px;top:274.00px;font-size:10.8px;color:#000;font-weight:400;font-family:'Liberation Sans',sans-serif;z-index:6;"><span class="dt">Berufliche<span class="sp"> </span>Identität<span class="sp"> </span>und<span class="sp"> </span>professionelle<span class="sp"> </span>Perspektiven<span class="sp"> </span>entwickeln</span></div><div class="t" style="left:827.00px;top:271.00px;font-size:14px;color:#000;font-weight:400;font-family:'Liberation Sans',sans-serif;z-index:6;transform:scaleX(0.9357);transform-origin:0 0;"><span class="dt"><span class="hl">JZW_LF1</span><span style="font-size:12px">¶</span></span></div><div class="t" style="left:404.00px;top:289.00px;font-size:10.8px;color:#000;font-weight:400;font-family:'Liberation Sans',sans-serif;z-index:6;"><span class="dt">LF2:</span></div><div class="t" style="left:446.07px;top:289.00px;font-size:10.8px;color:#000;font-weight:400;font-family:'Liberation Sans',sans-serif;z-index:6;"><span class="dt">Pädagogische<span class="sp"> </span>Beziehungen<span class="sp"> </span>gestalten<span class="sp"> </span>und<span class="sp"> </span>mit<span class="sp"> </span>Gruppen</span></div><div class="t" style="left:446.07px;top:306.00px;font-size:10.8px;color:#000;font-weight:400;font-family:'Liberation Sans',sans-serif;z-index:6;"><span class="dt">pädagogisch<span class="sp"> </span>arbeiten</span></div><div class="t" style="left:827.00px;top:303.00px;font-size:14px;color:#000;font-weight:400;font-family:'Liberation Sans',sans-serif;z-index:6;transform:scaleX(0.9357);transform-origin:0 0;"><span class="dt"><span class="hl">JZW_LF2</span><span style="font-size:12px">¶</span></span></div><div class="t" style="left:404.00px;top:323.00px;font-size:10.8px;color:#000;font-weight:400;font-family:'Liberation Sans',sans-serif;z-index:6;"><span class="dt">LF3:<span class="sp"> </span></span></div><div class="t" style="left:446.07px;top:323.00px;font-size:10.8px;color:#000;font-weight:400;font-family:'Liberation Sans',sans-serif;z-index:6;"><span class="dt">Lebenswelten<span class="sp"> </span>und<span class="sp"> </span>Diversität<span class="sp"> </span>wahrnehmen,<span class="sp"> </span>verstehen<span class="sp"> </span>und<span class="sp"> </span>Inklusion<span class="sp"> </span>fördern</span></div><div class="t" style="left:827.00px;top:320.00px;font-size:14px;color:#000;font-weight:400;font-family:'Liberation Sans',sans-serif;z-index:6;transform:scaleX(0.9357);transform-origin:0 0;"><span class="dt"><span class="hl">JZW_LF3</span><span style="font-size:12px">¶</span></span></div><div class="t" style="left:404.00px;top:338.00px;font-size:10.8px;color:#000;font-weight:400;font-family:'Liberation Sans',sans-serif;z-index:6;"><span class="dt">LF4:<span class="sp"> </span></span></div><div class="t" style="left:446.07px;top:338.00px;font-size:10.8px;color:#000;font-weight:400;font-family:'Liberation Sans',sans-serif;z-index:6;"><span class="dt">Sozialpädagogische<span class="sp"> </span>Bildungsarbeit<span class="sp"> </span>in<span class="sp"> </span>den<span class="sp"> </span>Bildungsbereichen<span class="sp"> </span>professionell</span></div><div class="t" style="left:446.07px;top:355.00px;font-size:10.8px;color:#000;font-weight:400;font-family:'Liberation Sans',sans-serif;z-index:6;"><span class="dt">gestalten</span></div><div class="t" style="left:827.00px;top:352.00px;font-size:14px;color:#000;font-weight:400;font-family:'Liberation Sans',sans-serif;z-index:6;transform:scaleX(0.9357);transform-origin:0 0;"><span class="dt"><span class="hl">JZW_LF4</span><span style="font-size:12px">¶</span></span></div><div class="t" style="left:404.00px;top:370.00px;font-size:10.8px;color:#000;font-weight:400;font-family:'Liberation Sans',sans-serif;z-index:6;"><span class="dt">LF5:<span class="sp"> </span></span></div><div class="t" style="left:446.07px;top:370.00px;font-size:10.8px;color:#000;font-weight:400;font-family:'Liberation Sans',sans-serif;z-index:6;"><span class="dt">Erziehungs-<span class="sp"> </span>und<span class="sp"> </span>Bildungspartnerschaften<span class="sp"> </span>mit<span class="sp"> </span>Eltern<span class="sp"> </span>und<span class="sp"> </span>Bezugspersonen</span></div><div class="t" style="left:446.07px;top:386.00px;font-size:10.8px;color:#000;font-weight:400;font-family:'Liberation Sans',sans-serif;z-index:6;"><span class="dt">gestalten<span class="sp"> </span>sowie<span class="sp"> </span>Übergänge<span class="sp"> </span>unterstützen</span></div><div class="t" style="left:827.00px;top:383.00px;font-size:14px;color:#000;font-weight:400;font-family:'Liberation Sans',sans-serif;z-index:6;transform:scaleX(0.9357);transform-origin:0 0;"><span class="dt"><span class="hl">JZW_LF5</span><span style="font-size:12px">¶</span></span></div><div class="t" style="left:404.00px;top:403.00px;font-size:10.8px;color:#000;font-weight:400;font-family:'Liberation Sans',sans-serif;z-index:6;"><span class="dt">LF6:<span class="sp"> </span></span></div><div class="t" style="left:446.07px;top:403.00px;font-size:10.8px;color:#000;font-weight:400;font-family:'Liberation Sans',sans-serif;z-index:6;"><span class="dt">Institution<span class="sp"> </span>und<span class="sp"> </span>Team<span class="sp"> </span>entwickeln<span class="sp"> </span>sowie<span class="sp"> </span>in<span class="sp"> </span>Netzwerken<span class="sp"> </span>kooperieren</span></div><div class="t" style="left:827.00px;top:400.00px;font-size:14px;color:#000;font-weight:400;font-family:'Liberation Sans',sans-serif;z-index:6;transform:scaleX(0.9357);transform-origin:0 0;"><span class="dt"><span class="hl">JZW_LF6</span><span style="font-size:12px">¶</span></span></div><div class="t" style="left:404.00px;top:418.00px;font-size:14px;color:#000;font-weight:400;font-family:'Liberation Sans',sans-serif;z-index:6;transform:scaleX(0.9357);transform-origin:0 0;"><span class="dt">¶</span></div><div class="t" style="left:404.00px;top:433.00px;font-size:14px;color:#000;font-weight:400;font-family:'Liberation Sans',sans-serif;z-index:6;transform:scaleX(0.9357);transform-origin:0 0;"><span class="dt">Religionslehre/<span class="sp"> </span>Religionspädagogik</span></div><div class="t" style="left:827.00px;top:433.00px;font-size:14px;color:#000;font-weight:400;font-family:'Liberation Sans',sans-serif;z-index:6;transform:scaleX(0.9357);transform-origin:0 0;"><span class="dt"><span class="hl">JZW_Reli</span>¶</span></div><div class="t" style="left:404.00px;top:448.00px;font-size:14px;color:#000;font-weight:400;font-family:'Liberation Sans',sans-serif;z-index:6;transform:scaleX(0.9357);transform-origin:0 0;"><span class="dt">Wahlfach<span class="sp"> </span>1:<span class="sp"> </span>Vertiefung<span class="sp"> </span>in<span class="sp"> </span>einem<span class="sp"> </span>Bildungsbereich</span></div><div class="t" style="left:827.00px;top:448.00px;font-size:14px;color:#000;font-weight:400;font-family:'Liberation Sans',sans-serif;z-index:6;transform:scaleX(0.9357);transform-origin:0 0;"><span class="dt"><span class="hl">JZW_VT_BB</span>¶</span></div><div class="t" style="left:404.00px;top:463.00px;font-size:14px;color:#000;font-weight:400;font-family:'Liberation Sans',sans-serif;z-index:6;transform:scaleX(0.9357);transform-origin:0 0;"><span class="dt">Wahlfach<span class="sp"> </span>2:<span class="sp"> </span>Vertiefung<span class="sp"> </span>eines<span class="sp"> </span>Arbeitsfeldes/<span class="sp"> </span>einer<span class="sp"> </span>Zielgruppe</span></div><div class="t" style="left:827.00px;top:463.00px;font-size:14px;color:#000;font-weight:400;font-family:'Liberation Sans',sans-serif;z-index:6;transform:scaleX(0.9357);transform-origin:0 0;"><span class="dt"><span class="hl">JZW_VT_AF</span>¶</span></div><div class="t" style="left:404.00px;top:478.00px;font-size:14px;color:#000;font-weight:400;font-family:'Liberation Sans',sans-serif;z-index:6;transform:scaleX(0.9357);transform-origin:0 0;"><span class="dt">Sozialpädagogische<span class="sp"> </span>Praxis<span class="sp"> </span>in<span class="sp"> </span>Einrichtungen<span class="sp"> </span>für<span class="sp"> </span>¶</span></div><div class="t" style="left:404.00px;top:493.00px;font-size:14px;color:#000;font-weight:400;font-family:'Liberation Sans',sans-serif;z-index:6;transform:scaleX(0.9357);transform-origin:0 0;"><span class="dt">Kinder,<span class="sp"> </span>Jugendliche<span class="sp"> </span>und<span class="sp"> </span>junge<span class="sp"> </span>Erwachsene</span></div><div class="t" style="left:827.00px;top:493.00px;font-size:14px;color:#000;font-weight:400;font-family:'Liberation Sans',sans-serif;z-index:6;transform:scaleX(0.9357);transform-origin:0 0;"><span class="dt"><span class="hl">JZW_Praxis_FSP</span>¶</span></div><div class="t" style="left:404.00px;top:509.00px;font-size:14px;color:#000;font-weight:400;font-family:'Liberation Sans',sans-serif;z-index:6;transform:scaleX(0.9357);transform-origin:0 0;"><span class="dt">¶</span></div><div class="t" style="left:404.00px;top:524.00px;font-size:14px;color:#000;font-weight:400;font-family:'Liberation Sans',sans-serif;z-index:6;transform:scaleX(0.9357);transform-origin:0 0;"><span class="dt">Projektarbeit:</span></div><div class="t" style="left:827.00px;top:524.00px;font-size:14px;color:#000;font-weight:400;font-family:'Liberation Sans',sans-serif;z-index:6;transform:scaleX(0.9357);transform-origin:0 0;"><span class="dt"><span class="hl">JZW_Projekt</span>¶</span></div><div class="t" style="left:404.00px;top:540.00px;font-size:10.8px;color:#000;font-weight:400;font-family:'Liberation Sans',sans-serif;z-index:6;"><span class="dt">Thema:<span class="sp"> </span>Planung,<span class="sp"> </span>Durchführung<span class="sp"> </span>und<span class="sp"> </span>Reflexion<span class="sp"> </span>eines<span class="sp"> </span>zielgruppenorientierten¶</span></div><div class="t" style="left:404.00px;top:553.00px;font-size:10.8px;color:#000;font-weight:400;font-family:'Liberation Sans',sans-serif;z-index:6;"><span class="dt">Bühnenprogramms<span class="sp"> </span>¶</span></div><div class="t" style="left:404.00px;top:567.00px;font-size:14px;color:#000;font-weight:400;font-family:'Liberation Sans',sans-serif;z-index:6;transform:scaleX(0.9357);transform-origin:0 0;"><span class="dt">¶</span></div><div class="t" style="left:404.00px;top:582.00px;font-size:14px;color:#000;font-weight:700;font-family:'Liberation Sans',sans-serif;z-index:6;transform:scaleX(0.9357);transform-origin:0 0;"><span class="dt">Berufsübergreifender<span class="sp"> </span>Lernbereich<span class="sp"> </span>¶</span></div><div class="t" style="left:404.00px;top:597.00px;font-size:14px;color:#000;font-weight:400;font-family:'Liberation Sans',sans-serif;z-index:6;transform:scaleX(0.9357);transform-origin:0 0;"><span class="dt">Deutsch/Kommunikation</span></div><div class="t" style="left:827.00px;top:597.00px;font-size:14px;color:#000;font-weight:400;font-family:'Liberation Sans',sans-serif;z-index:6;transform:scaleX(0.9357);transform-origin:0 0;"><span class="dt"><span class="hl">JZW_Deutsch</span>¶</span></div><div class="t" style="left:404.00px;top:612.00px;font-size:14px;color:#000;font-weight:400;font-family:'Liberation Sans',sans-serif;z-index:6;transform:scaleX(0.9357);transform-origin:0 0;"><span class="dt">Englisch<span class="sp"> </span>(B2)</span></div><div class="t" style="left:481.91px;top:612.00px;font-size:14px;color:#000;font-weight:400;font-family:'Liberation Sans',sans-serif;z-index:6;transform:scaleX(0.9357);transform-origin:0 0;"><span class="dt"><span style="font-size:7.5px;vertical-align:5px">3</span><span class="sp"> </span></span></div><div class="t" style="left:827.00px;top:612.00px;font-size:14px;color:#000;font-weight:400;font-family:'Liberation Sans',sans-serif;z-index:6;transform:scaleX(0.9357);transform-origin:0 0;"><span class="dt"><span class="hl">JZW_Englisch</span>¶</span></div><div class="t" style="left:404.00px;top:628.00px;font-size:14px;color:#000;font-weight:400;font-family:'Liberation Sans',sans-serif;z-index:6;transform:scaleX(0.9357);transform-origin:0 0;"><span class="dt">Naturwissenschaften</span></div><div class="t" style="left:827.00px;top:628.00px;font-size:14px;color:#000;font-weight:400;font-family:'Liberation Sans',sans-serif;z-index:6;transform:scaleX(0.9357);transform-origin:0 0;"><span class="dt"><span class="hl">JZW_NaWi</span>¶</span></div><div class="t" style="left:404.00px;top:643.00px;font-size:14px;color:#000;font-weight:400;font-family:'Liberation Sans',sans-serif;z-index:6;transform:scaleX(0.9357);transform-origin:0 0;"><span class="dt">Politik/Gesellschaftslehre</span></div><div class="t" style="left:827.00px;top:643.00px;font-size:14px;color:#000;font-weight:400;font-family:'Liberation Sans',sans-serif;z-index:6;transform:scaleX(0.9357);transform-origin:0 0;"><span class="dt"><span class="hl">JZW_Politik</span>¶</span></div><div class="t" style="left:404.00px;top:658.00px;font-size:14px;color:#000;font-weight:400;font-family:'Liberation Sans',sans-serif;z-index:6;transform:scaleX(0.9357);transform-origin:0 0;"><span class="dt">¶</span></div><div class="t" style="left:404.00px;top:673.00px;font-size:14px;color:#000;font-weight:700;font-family:'Liberation Sans',sans-serif;z-index:6;transform:scaleX(0.9357);transform-origin:0 0;"><span class="dt">Differenzierungsbereich¶</span></div><div class="t" style="left:404.00px;top:688.00px;font-size:14px;color:#000;font-weight:400;font-family:'Liberation Sans',sans-serif;z-index:6;transform:scaleX(0.9357);transform-origin:0 0;"><span class="dt">Mathematik</span></div><div class="t" style="left:827.00px;top:688.00px;font-size:14px;color:#000;font-weight:400;font-family:'Liberation Sans',sans-serif;z-index:6;transform:scaleX(0.9357);transform-origin:0 0;"><span class="dt"><span class="hl">JZW_Diff_Mathe</span>¶</span></div><div class="t" style="left:23.00px;top:11.00px;font-size:12px;color:#ffffff;font-weight:400;font-family:'Liberation Sans',sans-serif;z-index:5;transform:scaleX(0.9847);transform-origin:0 0;">Automatisches Speichern</div><div class="t" style="left:676.50px;top:11.00px;font-size:12px;color:#ffffff;font-weight:400;font-family:'Liberation Sans',sans-serif;z-index:5;left:491.00px;transform:scaleX(0.9627);transform-origin:0 0;">Zeugnisvorlage_FSP_Abschlusszeugnis  -  Auf "diesem PC" gespeichert</div><div class="t" style="left:1076.00px;top:12.00px;font-size:12px;color:#ffffff;font-weight:400;font-family:'Liberation Sans',sans-serif;z-index:5;transform:scaleX(0.9937);transform-origin:0 0;">Verwaltung</div><div class="t" style="left:1158.00px;top:13.00px;font-size:11px;color:#e8e0f0;font-weight:400;font-family:'Liberation Sans',sans-serif;z-index:5;left:1154.33px;">V</div><div class="t" style="left:12.50px;top:43.00px;font-size:13px;color:#262626;font-weight:400;font-family:'Liberation Sans',sans-serif;z-index:5;transform:scaleX(0.9651);transform-origin:0 0;">Datei</div><div class="t" style="left:68.20px;top:43.00px;font-size:13px;color:#262626;font-weight:400;font-family:'Liberation Sans',sans-serif;z-index:5;transform:scaleX(1.0557);transform-origin:0 0;">Start</div><div class="t" style="left:125.20px;top:43.00px;font-size:13px;color:#262626;font-weight:400;font-family:'Liberation Sans',sans-serif;z-index:5;transform:scaleX(0.9624);transform-origin:0 0;">Einfügen</div><div class="t" style="left:206.20px;top:43.00px;font-size:13px;color:#262626;font-weight:400;font-family:'Liberation Sans',sans-serif;z-index:5;transform:scaleX(0.9642);transform-origin:0 0;">Entwurf</div><div class="t" style="left:279.30px;top:43.00px;font-size:13px;color:#262626;font-weight:400;font-family:'Liberation Sans',sans-serif;z-index:5;transform:scaleX(0.9629);transform-origin:0 0;">Layout</div><div class="t" style="left:347.20px;top:43.00px;font-size:13px;color:#262626;font-weight:400;font-family:'Liberation Sans',sans-serif;z-index:5;transform:scaleX(0.9596);transform-origin:0 0;">Referenzen</div><div class="t" style="left:441.70px;top:43.00px;font-size:13px;color:#262626;font-weight:400;font-family:'Liberation Sans',sans-serif;z-index:5;transform:scaleX(0.9757);transform-origin:0 0;">Sendungen</div><div class="t" style="left:537.30px;top:43.00px;font-size:13px;color:#262626;font-weight:400;font-family:'Liberation Sans',sans-serif;z-index:5;transform:scaleX(1.0177);transform-origin:0 0;">Überprüfen</div><div class="t" style="left:634.10px;top:43.00px;font-size:13px;color:#262626;font-weight:400;font-family:'Liberation Sans',sans-serif;z-index:5;transform:scaleX(0.9498);transform-origin:0 0;">Ansicht</div><div class="t" style="left:704.30px;top:43.00px;font-size:13px;color:#262626;font-weight:400;font-family:'Liberation Sans',sans-serif;z-index:5;transform:scaleX(0.9725);transform-origin:0 0;">Hilfe</div><div class="t" style="left:786.30px;top:43.00px;font-size:13px;color:#262626;font-weight:400;font-family:'Liberation Sans',sans-serif;z-index:5;transform:scaleX(0.9026);transform-origin:0 0;">Suchen</div><div class="t" style="left:1189.00px;top:43.00px;font-size:13px;color:#2b579a;font-weight:700;font-family:'Liberation Sans',sans-serif;z-index:5;transform:scaleX(0.9014);transform-origin:0 0;">Teilen</div><div class="t" style="left:1265.00px;top:43.00px;font-size:13px;color:#2b579a;font-weight:700;font-family:'Liberation Sans',sans-serif;z-index:5;transform:scaleX(0.9941);transform-origin:0 0;">Kommentare</div><div class="t" style="left:89.00px;top:146.00px;font-size:12px;color:#444444;font-weight:400;font-family:'Liberation Sans',sans-serif;z-index:5;left:47.85px;transform:scaleX(0.9490);transform-origin:0 0;">Zwischenablage</div><div class="t" style="left:326.00px;top:146.00px;font-size:12px;color:#444444;font-weight:400;font-family:'Liberation Sans',sans-serif;z-index:5;left:303.00px;transform:scaleX(0.9580);transform-origin:0 0;">Schriftart</div><div class="t" style="left:582.00px;top:146.00px;font-size:12px;color:#444444;font-weight:400;font-family:'Liberation Sans',sans-serif;z-index:5;left:563.50px;transform:scaleX(1.0085);transform-origin:0 0;">Absatz</div><div class="t" style="left:897.00px;top:146.00px;font-size:12px;color:#444444;font-weight:400;font-family:'Liberation Sans',sans-serif;z-index:5;left:856.50px;transform:scaleX(0.9637);transform-origin:0 0;">Formatvorlagen</div><div class="t" style="left:1156.50px;top:146.00px;font-size:12px;color:#444444;font-weight:400;font-family:'Liberation Sans',sans-serif;z-index:5;left:1129.00px;transform:scaleX(0.9475);transform-origin:0 0;">Bearbeiten</div><div class="t" style="left:1243.50px;top:146.00px;font-size:12px;color:#444444;font-weight:400;font-family:'Liberation Sans',sans-serif;z-index:5;left:1223.50px;transform:scaleX(0.8948);transform-origin:0 0;">Sprache</div><div class="t" style="left:10.00px;top:107.00px;font-size:12px;color:#363636;font-weight:400;font-family:'Liberation Sans',sans-serif;z-index:5;transform:scaleX(0.9752);transform-origin:0 0;">Einfügen</div><div class="t" style="left:82.40px;top:74.00px;font-size:12px;color:#a19f9d;font-weight:400;font-family:'Liberation Sans',sans-serif;z-index:5;transform:scaleX(0.9656);transform-origin:0 0;">Ausschneiden</div><div class="t" style="left:82.40px;top:98.00px;font-size:12px;color:#a19f9d;font-weight:400;font-family:'Liberation Sans',sans-serif;z-index:5;transform:scaleX(0.9574);transform-origin:0 0;">Kopieren</div><div class="t" style="left:82.40px;top:122.00px;font-size:12px;color:#363636;font-weight:400;font-family:'Liberation Sans',sans-serif;z-index:5;transform:scaleX(0.9860);transform-origin:0 0;">Format übertragen</div><div class="t" style="left:207.50px;top:82.00px;font-size:12px;color:#363636;font-weight:400;font-family:'Liberation Sans',sans-serif;z-index:5;transform:scaleX(0.9577);transform-origin:0 0;">Arial</div><div class="t" style="left:292.00px;top:82.00px;font-size:12px;color:#363636;font-weight:400;font-family:'Liberation Sans',sans-serif;z-index:5;transform:scaleX(0.9357);transform-origin:0 0;">12</div><div class="t" style="left:356.00px;top:80.00px;font-size:14px;color:#363636;font-weight:400;font-family:'Liberation Sans',sans-serif;z-index:5;transform:scaleX(0.9632);transform-origin:0 0;">A</div><div class="t" style="left:378.00px;top:81.00px;font-size:13px;color:#363636;font-weight:400;font-family:'Liberation Sans',sans-serif;z-index:5;transform:scaleX(0.9802);transform-origin:0 0;">A</div><div class="t" style="left:406.00px;top:81.00px;font-size:13px;color:#363636;font-weight:400;font-family:'Liberation Sans',sans-serif;z-index:5;transform:scaleX(1.0059);transform-origin:0 0;">Aa</div><div class="t" style="left:448.00px;top:78.00px;font-size:17px;color:#363636;font-weight:400;font-family:'Liberation Sans',sans-serif;z-index:5;font-weight:300;transform:scaleX(0.7934);transform-origin:0 0;">A</div><div class="t" style="left:210.50px;top:113.00px;font-size:12px;color:#363636;font-weight:700;font-family:'Liberation Sans',sans-serif;z-index:5;transform:scaleX(1.0894);transform-origin:0 0;">F</div><div class="t" style="left:232.00px;top:113.00px;font-size:12px;color:#363636;font-weight:400;font-family:'Liberation Sans',sans-serif;z-index:5;font-style:italic;transform:scaleX(1.1228);transform-origin:0 0;">K</div><div class="t" style="left:254.00px;top:113.00px;font-size:12px;color:#363636;font-weight:400;font-family:'Liberation Sans',sans-serif;z-index:5;transform:scaleX(1.0378);transform-origin:0 0;">U</div><div class="t" style="left:285.00px;top:113.00px;font-size:12px;color:#363636;font-weight:400;font-family:'Liberation Sans',sans-serif;z-index:5;transform:scaleX(1.1228);transform-origin:0 0;">ab</div><div class="t" style="left:311.00px;top:113.00px;font-size:12px;color:#363636;font-weight:700;font-family:'Liberation Sans',sans-serif;z-index:5;transform:scaleX(1.0467);transform-origin:0 0;">x</div><div class="t" style="left:318.00px;top:120.00px;font-size:7px;color:#1e8bcd;font-weight:700;font-family:'Liberation Sans',sans-serif;z-index:5;">2</div><div class="t" style="left:333.00px;top:113.00px;font-size:12px;color:#363636;font-weight:700;font-family:'Liberation Sans',sans-serif;z-index:5;transform:scaleX(1.0467);transform-origin:0 0;">x</div><div class="t" style="left:340.00px;top:112.00px;font-size:7px;color:#1e8bcd;font-weight:700;font-family:'Liberation Sans',sans-serif;z-index:5;">2</div><div class="t" style="left:361.00px;top:110.00px;font-size:18px;color:#1e6fc0;font-weight:700;font-family:'Liberation Sans',sans-serif;z-index:5;-webkit-text-stroke:1.6px #1e6fc0;color:#dfeefb;transform:scaleX(1.1154);transform-origin:0 0;">A</div><div class="t" style="left:427.50px;top:109.00px;font-size:15px;color:#363636;font-weight:400;font-family:'Liberation Sans',sans-serif;z-index:5;transform:scaleX(1.0983);transform-origin:0 0;">A</div><div class="t" style="left:682.00px;top:80.00px;font-size:15px;color:#222;font-weight:400;font-family:'Liberation Sans',sans-serif;z-index:5;transform:scaleX(1.3643);transform-origin:0 0;">¶</div><div class="t" style="left:723.00px;top:87.00px;font-size:12.5px;color:#000;font-weight:400;font-family:'Liberation Sans',sans-serif;z-index:5;font-family:"Liberation Sans";transform:scaleX(0.9813);transform-origin:0 0;">AaBbCcDc</div><div class="t" style="left:796.00px;top:87.00px;font-size:12.5px;color:#000;font-weight:400;font-family:'Liberation Sans',sans-serif;z-index:5;transform:scaleX(0.9650);transform-origin:0 0;">AaBbCcDc</div><div class="t" style="left:867.00px;top:83.00px;font-size:19px;color:#2e74b5;font-weight:400;font-family:'Liberation Serif',sans-serif;z-index:5;transform:scaleX(1.0351);transform-origin:0 0;">AaBbC</div><div class="t" style="left:940.00px;top:85.00px;font-size:15px;color:#2e74b5;font-weight:400;font-family:'Liberation Serif',sans-serif;z-index:5;transform:scaleX(1.0389);transform-origin:0 0;">AaBbCcl</div><div class="t" style="left:724.00px;top:111.00px;font-size:12px;color:#444;font-weight:400;font-family:'Liberation Sans',sans-serif;z-index:5;transform:scaleX(0.9746);transform-origin:0 0;">¶ Standard</div><div class="t" style="left:794.00px;top:111.00px;font-size:12px;color:#444;font-weight:400;font-family:'Liberation Sans',sans-serif;z-index:5;transform:scaleX(0.9232);transform-origin:0 0;">¶ Kein Lee...</div><div class="t" style="left:865.00px;top:111.00px;font-size:12px;color:#444;font-weight:400;font-family:'Liberation Sans',sans-serif;z-index:5;transform:scaleX(0.9739);transform-origin:0 0;">Überschrif...</div><div class="t" style="left:937.00px;top:111.00px;font-size:12px;color:#444;font-weight:400;font-family:'Liberation Sans',sans-serif;z-index:5;transform:scaleX(0.9739);transform-origin:0 0;">Überschrif...</div><div class="t" style="left:1041.00px;top:111.00px;font-size:12px;color:#444;font-weight:400;font-family:'Liberation Sans',sans-serif;z-index:5;left:1030.00px;transform:scaleX(0.9895);transform-origin:0 0;">Titel</div><div class="t" style="left:1134.00px;top:73.00px;font-size:12px;color:#363636;font-weight:400;font-family:'Liberation Sans',sans-serif;z-index:5;transform:scaleX(0.9582);transform-origin:0 0;">Suchen</div><div class="t" style="left:1134.00px;top:96.00px;font-size:12px;color:#363636;font-weight:400;font-family:'Liberation Sans',sans-serif;z-index:5;transform:scaleX(0.8868);transform-origin:0 0;">Ersetzen</div><div class="t" style="left:1134.00px;top:119.00px;font-size:12px;color:#363636;font-weight:400;font-family:'Liberation Sans',sans-serif;z-index:5;transform:scaleX(0.9745);transform-origin:0 0;">Markieren</div><div class="t" style="left:1243.50px;top:107.00px;font-size:12px;color:#363636;font-weight:400;font-family:'Liberation Sans',sans-serif;z-index:5;left:1220.50px;transform:scaleX(0.9713);transform-origin:0 0;">Diktieren</div><div class="t" style="left:8.00px;top:710.00px;font-size:12px;color:#444;font-weight:400;font-family:'Liberation Sans',sans-serif;z-index:5;transform:scaleX(0.9277);transform-origin:0 0;">Seite 2 von 4</div><div class="t" style="left:92.00px;top:710.00px;font-size:12px;color:#444;font-weight:400;font-family:'Liberation Sans',sans-serif;z-index:5;transform:scaleX(0.9603);transform-origin:0 0;">260 Wörter</div><div class="t" style="left:1328.00px;top:710.00px;font-size:12px;color:#444;font-weight:400;font-family:'Liberation Sans',sans-serif;z-index:5;transform:scaleX(0.8772);transform-origin:0 0;">90 %</div><div class="t" style="left:88.00px;top:741.00px;font-size:15px;color:#1f1f1f;font-weight:400;font-family:'Liberation Sans',sans-serif;z-index:5;transform:scaleX(0.9735);transform-origin:0 0;">Zur Suche Text hier eingeben</div><div class="t" style="left:1280.00px;top:734.00px;font-size:12px;color:#fff;font-weight:400;font-family:'Liberation Sans',sans-serif;z-index:5;left:1266.50px;transform:scaleX(0.8991);transform-origin:0 0;">18:59</div><div class="t" style="left:1280.00px;top:751.00px;font-size:12px;color:#fff;font-weight:400;font-family:'Liberation Sans',sans-serif;z-index:5;left:1253.50px;transform:scaleX(0.8824);transform-origin:0 0;">12.06.2020</div></body></html>
